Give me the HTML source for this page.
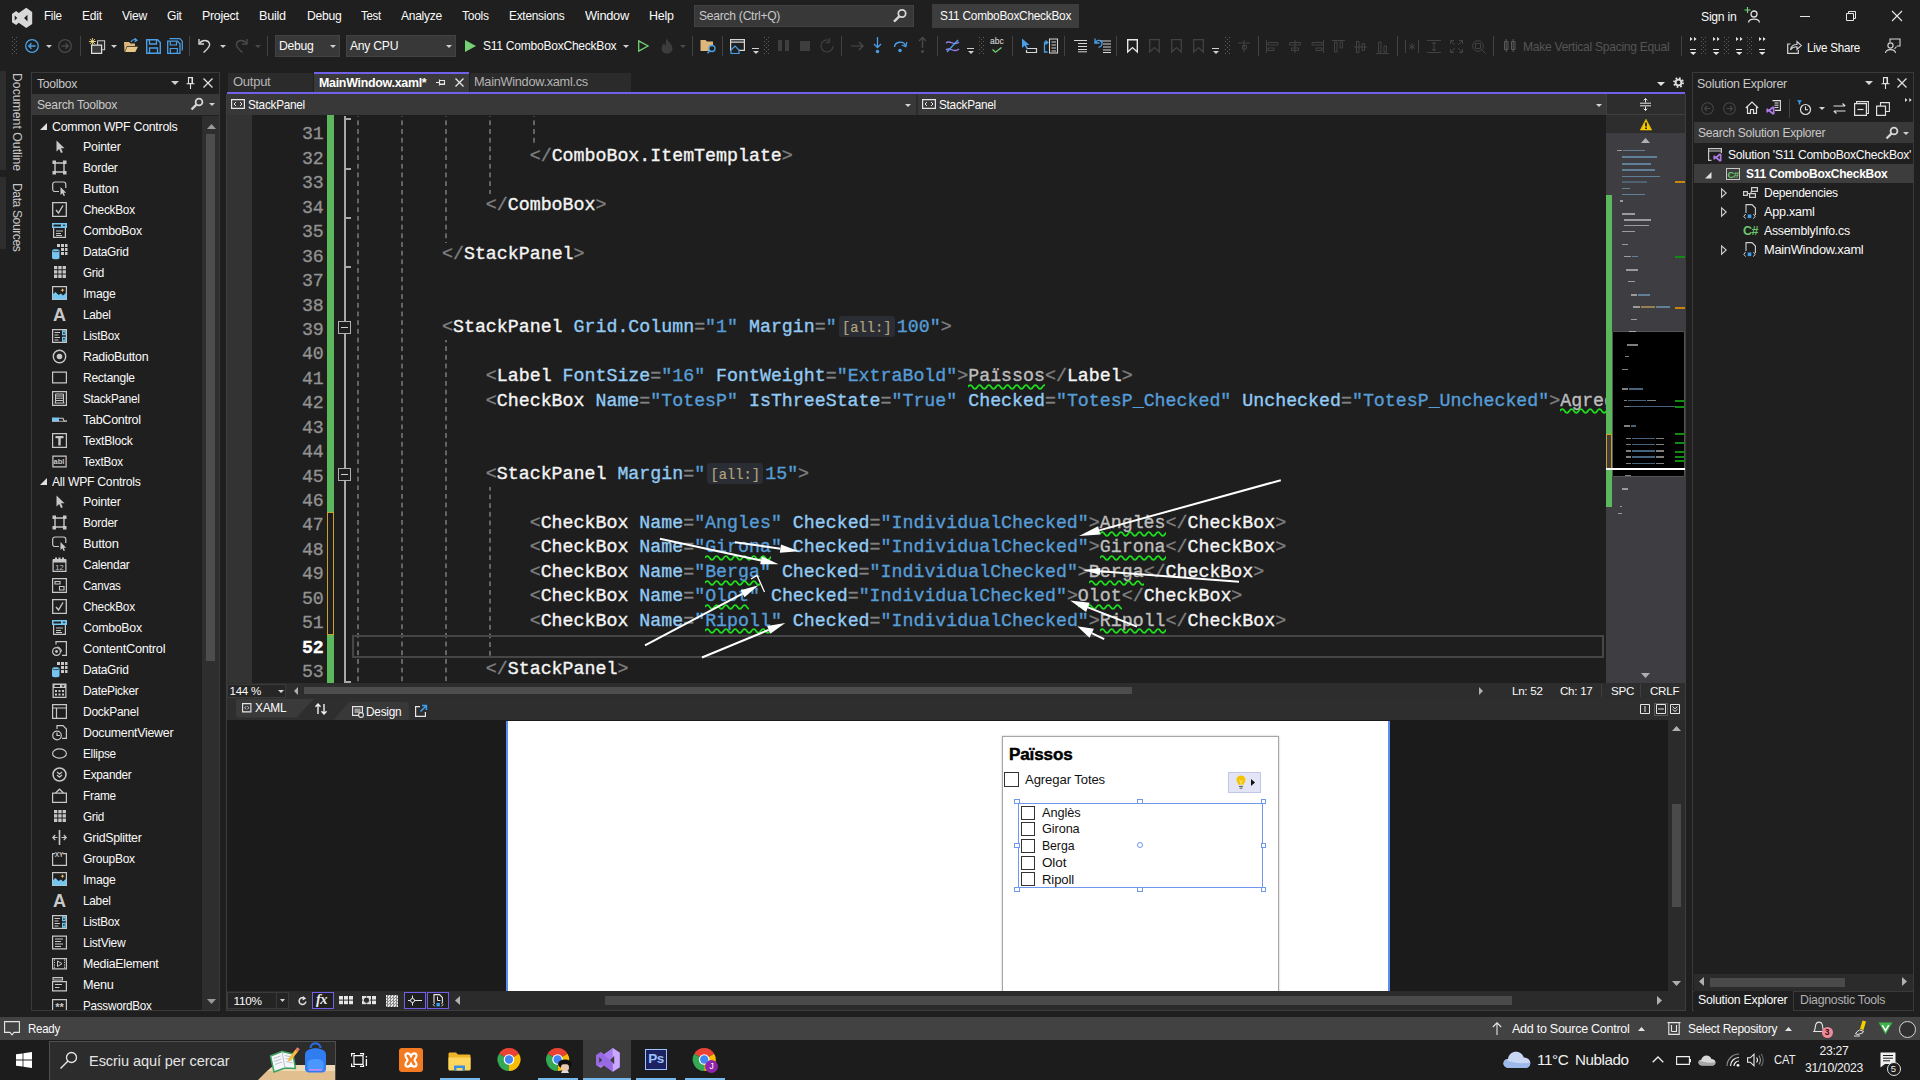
<!DOCTYPE html>
<html><head><meta charset="utf-8"><title>S11 ComboBoxCheckBox</title>
<style>
*{box-sizing:border-box;margin:0;padding:0}
html,body{width:1920px;height:1080px;overflow:hidden;background:#1f1f1f}
body{font-family:"Liberation Sans",sans-serif;font-size:12px;color:#f0f0f0}
#root{position:relative;width:1920px;height:1080px;overflow:hidden;background:#1f1f1f}
.a{position:absolute}
.t{position:absolute;white-space:nowrap;line-height:16px;height:16px;font-size:12.2px;letter-spacing:-0.27px;color:#fafafa}
.dim{color:#6a6a6a}
.g{color:#c8c8c8}
svg{position:absolute;overflow:visible}
.mono{font-family:"Liberation Mono",monospace}
.code{position:absolute;white-space:pre;font-family:"Liberation Mono",monospace;font-size:18.27px;line-height:24px;height:24px;color:#bdbdbd;-webkit-text-stroke:0.35px currentColor}
.ln{position:absolute;white-space:pre;font-family:"Liberation Mono",monospace;font-size:18.25px;line-height:24px;height:24px;color:#929292;-webkit-text-stroke:0.3px currentColor;width:60px;text-align:right;left:263.8px}
.k{color:#f4f4f4}.p{color:#808080}.at{color:#92caf4}.v{color:#569cd6}.q{color:#a8c8e8}
.sq{position:relative}
.hint{display:inline-block;font-size:13.75px;color:#b3a47c;background:#2b2d35;border-radius:3px;padding:0 3.3px 0 3.4px;height:20.8px;line-height:25.3px;vertical-align:-0.1px;margin:0 2px 0 1.9px;-webkit-text-stroke:0.2px currentColor}
.guide{position:absolute;width:2px;background-image:linear-gradient(#646464 0 4.4px,transparent 4.4px 8.7px);background-size:2px 8.7px;background-repeat:repeat-y}
</style></head><body><div id="root">
<svg style="left:0px;top:0px" width="40" height="32" viewBox="0 0 40 32"><path d="M12 13.9L16.1 11.1L18.75 13.1L26.25 7.8L32.2 11.9V24.1L26.25 28.1L18.75 22.8L16.1 24.9L12 22.2ZM14.7 15.6V20.6L17.2 18.1ZM27.5 14.7L24.06 18.1L27.5 21.6Z" fill="#d8d8d8" fill-rule="evenodd"/></svg>
<div class="t " style="left:44.25px;top:8px;font-size:12.2px;letter-spacing:-0.27px;transform:scaleX(0.9555);transform-origin:0 50%;">File</div>
<div class="t " style="left:82.25px;top:8px;font-size:12.2px;letter-spacing:-0.27px;transform:scaleX(0.9904);transform-origin:0 50%;">Edit</div>
<div class="t " style="left:122px;top:8px;font-size:12.2px;letter-spacing:-0.27px;transform:scaleX(0.9943);transform-origin:0 50%;">View</div>
<div class="t " style="left:167.25px;top:8px;font-size:12.2px;letter-spacing:-0.27px;transform:scaleX(0.9980);transform-origin:0 50%;">Git</div>
<div class="t " style="left:202.25px;top:8px;font-size:12.2px;letter-spacing:-0.27px;transform:scaleX(1.0186);transform-origin:0 50%;">Project</div>
<div class="t " style="left:259.25px;top:8px;font-size:12.2px;letter-spacing:-0.27px;transform:scaleX(1.0377);transform-origin:0 50%;">Build</div>
<div class="t " style="left:306.5px;top:8px;font-size:12.2px;letter-spacing:-0.27px;transform:scaleX(0.9972);transform-origin:0 50%;">Debug</div>
<div class="t " style="left:361px;top:8px;font-size:12.2px;letter-spacing:-0.27px;transform:scaleX(0.9392);transform-origin:0 50%;">Test</div>
<div class="t " style="left:401px;top:8px;font-size:12.2px;letter-spacing:-0.27px;transform:scaleX(0.9877);transform-origin:0 50%;">Analyze</div>
<div class="t " style="left:462.25px;top:8px;font-size:12.2px;letter-spacing:-0.27px;transform:scaleX(0.9860);transform-origin:0 50%;">Tools</div>
<div class="t " style="left:509.4px;top:8px;font-size:12.2px;letter-spacing:-0.27px;transform:scaleX(0.9759);transform-origin:0 50%;">Extensions</div>
<div class="t " style="left:585px;top:8px;font-size:12.2px;letter-spacing:-0.27px;transform:scaleX(1.0534);transform-origin:0 50%;">Window</div>
<div class="t " style="left:649.4px;top:8px;font-size:12.2px;letter-spacing:-0.27px;transform:scaleX(1.0246);transform-origin:0 50%;">Help</div>
<div class="a" style="left:694px;top:5px;width:220px;height:22px;background:#383838;border:1px solid #424242"></div>
<div class="t g" style="left:699.4px;top:8px;font-size:12.2px;letter-spacing:-0.27px;transform:scaleX(0.9938);transform-origin:0 50%;">Search (Ctrl+Q)</div>
<svg style="left:892px;top:8px" width="16" height="16" viewBox="0 0 16 16"><circle cx="10" cy="5.5" r="3.7" fill="none" stroke="#d6d6d6" stroke-width="1.8"/><path d="M7.3 8.3L2 13.6" stroke="#d6d6d6" stroke-width="2.4"/></svg>
<div class="a" style="left:932px;top:4px;width:147px;height:24px;background:#3d3d3d;"></div>
<div class="t " style="left:940px;top:8px;font-size:12.2px;letter-spacing:-0.27px;transform:scaleX(0.9741);transform-origin:0 50%;">S11 ComboBoxCheckBox</div>
<div class="t " style="left:1701px;top:9px;font-size:12.2px;letter-spacing:-0.27px;transform:scaleX(1.0025);transform-origin:0 50%;">Sign in</div>
<svg style="left:1746px;top:7px" width="16" height="18" viewBox="0 0 16 18"><circle cx="8" cy="7" r="3" fill="none" stroke="#e0e0e0" stroke-width="1.3"/><path d="M2.5 15.5C3 11 13 11 13.5 15.5" fill="none" stroke="#e0e0e0" stroke-width="1.3"/><path d="M1.5 0V6M-1.5 3H4.5" stroke="#74d174" stroke-width="1.2"/></svg>
<div class="a" style="left:1800px;top:16px;width:10px;height:1px;background:#e6e6e6;"></div>
<svg style="left:1846px;top:11px" width="10" height="10" viewBox="0 0 10 10"><path d="M0.5 2.5H7.5V9.5H0.5Z M2.5 2.5V0.5H9.5V7.5H7.5" fill="none" stroke="#e6e6e6" stroke-width="1"/></svg>
<svg style="left:1892px;top:11px" width="10" height="10" viewBox="0 0 10 10"><path d="M0 0L10 10M10 0L0 10" stroke="#e6e6e6" stroke-width="1.1"/></svg>
<div class="a" style="left:11px;top:35.6px;width:6px;height:18px;background-image:radial-gradient(circle at 1.5px 1.5px,#5e5e5e 0.5px,transparent 0.7px),radial-gradient(circle at 3.5px 3.5px,#5e5e5e 0.5px,transparent 0.7px);background-size:4px 4px"></div>
<svg style="left:23.6px;top:37.5px" width="16" height="16" viewBox="0 0 16 16"><circle cx="8" cy="8" r="6.3" fill="none" stroke="#4aa0e8" stroke-width="1.3"/><path d="M11.5 8H5M7.5 5.2L4.7 8L7.5 10.8" fill="none" stroke="#4aa0e8" stroke-width="1.3"/></svg>
<svg style="left:46.0px;top:44.5px" width="6" height="3" viewBox="0 0 6 3"><path d="M0 0H6L3.0 3Z" fill="#d0d0d0"/></svg>
<svg style="left:57.3px;top:37.5px" width="16" height="16" viewBox="0 0 16 16"><circle cx="8" cy="8" r="6.3" fill="none" stroke="#4a4a4a" stroke-width="1.3"/><path d="M4.5 8H11M8.5 5.2L11.3 8L8.5 10.8" fill="none" stroke="#4a4a4a" stroke-width="1.3"/></svg>
<div class="a" style="left:80px;top:36px;width:1px;height:20px;background:#424242;"></div>
<svg style="left:89px;top:38px" width="17" height="17" viewBox="0 0 17 17"><path d="M8.6 2.8H15.6V11.8H8.6Z" fill="#2a2a2a" stroke="#c8c8c8" stroke-width="1.1"/><path d="M2.6 7.2H12.6V15.4H2.6Z" fill="#3a3a3a" stroke="#e0e0e0" stroke-width="1.2"/><path d="M3.4 0V7M-0.1 3.5H6.9M0.9 1L5.9 6M5.9 1L0.9 6" stroke="#f5e08a" stroke-width="0.9"/></svg>
<svg style="left:111.0px;top:44.5px" width="6" height="3" viewBox="0 0 6 3"><path d="M0 0H6L3.0 3Z" fill="#d0d0d0"/></svg>
<svg style="left:123px;top:38px" width="16" height="16" viewBox="0 0 16 16"><path d="M1 4H6L7.5 5.5H12V8H4L1.5 14Z" fill="#dcb67a"/><path d="M4.3 8.7H15L12.3 14H2Z" fill="#e8c88a"/><path d="M8 4C9 1.5 11.5 1 13.5 2.2M11.8 0.2L14 2.3L11.6 3.8" fill="none" stroke="#4aa0e8" stroke-width="1.2"/></svg>
<svg style="left:146px;top:39px" width="15" height="15" viewBox="0 0 15 15"><path d="M0.7 0.7H11.5L14.3 3.5V14.3H0.7Z" fill="none" stroke="#4aa0e8" stroke-width="1.4"/><path d="M3.5 1V5H10.5V1M3.5 14V9H11.5V14" fill="none" stroke="#4aa0e8" stroke-width="1.3"/></svg>
<svg style="left:167px;top:38px" width="16" height="16" viewBox="0 0 16 16"><path d="M2.5 0.7H12.8L15.3 3.2V12.5" fill="none" stroke="#4aa0e8" stroke-width="1.2"/><path d="M0.7 3.2H10.5L13 5.7V15.3H0.7Z" fill="none" stroke="#4aa0e8" stroke-width="1.3"/><path d="M3.3 3.5V7H9.5V3.5M3.3 15V10.5H10.3V15" fill="none" stroke="#4aa0e8" stroke-width="1.2"/></svg>
<div class="a" style="left:189px;top:36px;width:1px;height:20px;background:#424242;"></div>
<svg style="left:198px;top:38px" width="14" height="16" viewBox="0 0 14 16"><path d="M1 1V6H6" fill="none" stroke="#d6d6d6" stroke-width="1.4"/><path d="M1.5 5.5C4 1.5 10 1.5 11.5 5.5C12.6 9 8 12 5.5 14.5" fill="none" stroke="#d6d6d6" stroke-width="1.4"/></svg>
<svg style="left:220.0px;top:44.5px" width="6" height="3" viewBox="0 0 6 3"><path d="M0 0H6L3.0 3Z" fill="#d0d0d0"/></svg>
<svg style="left:234px;top:38px" width="14" height="16" viewBox="0 0 14 16"><path d="M13 1V6H8" fill="none" stroke="#4a4a4a" stroke-width="1.4"/><path d="M12.5 5.5C10 1.5 4 1.5 2.5 5.5C1.4 9 6 12 8.5 14.5" fill="none" stroke="#4a4a4a" stroke-width="1.4"/></svg>
<svg style="left:255.0px;top:44.5px" width="6" height="3" viewBox="0 0 6 3"><path d="M0 0H6L3.0 3Z" fill="#4a4a4a"/></svg>
<div class="a" style="left:267px;top:36px;width:1px;height:20px;background:#424242;"></div>
<div class="a" style="left:275px;top:35px;width:65px;height:22px;background:#383838;border:1px solid #424242"></div>
<div class="t " style="left:279px;top:38px;">Debug</div>
<svg style="left:330.0px;top:45.0px" width="6" height="3" viewBox="0 0 6 3"><path d="M0 0H6L3.0 3Z" fill="#d0d0d0"/></svg>
<div class="a" style="left:346px;top:35px;width:110px;height:22px;background:#383838;border:1px solid #424242"></div>
<div class="t " style="left:350px;top:38px;">Any CPU</div>
<svg style="left:446.0px;top:44.5px" width="6" height="3" viewBox="0 0 6 3"><path d="M0 0H6L3.0 3Z" fill="#d0d0d0"/></svg>
<svg style="left:465px;top:40px" width="11" height="12" viewBox="0 0 11 12"><path d="M0 0L11 6L0 12Z" fill="#74d174"/></svg>
<div class="t " style="left:483px;top:38px;font-size:12.2px;letter-spacing:-0.27px;transform:scaleX(0.9908);transform-origin:0 50%;">S11 ComboBoxCheckBox</div>
<svg style="left:623.0px;top:44.5px" width="6" height="3" viewBox="0 0 6 3"><path d="M0 0H6L3.0 3Z" fill="#d0d0d0"/></svg>
<svg style="left:638px;top:40px" width="11" height="12" viewBox="0 0 11 12"><path d="M0.7 0.9L10 6L0.7 11.1Z" fill="none" stroke="#74d174" stroke-width="1.3"/></svg>
<svg style="left:660px;top:38px" width="14" height="16" viewBox="0 0 14 16"><path d="M7 0.5C8 4 12.5 6 12.5 10.5C12.5 13.5 10 15.5 7 15.5C4 15.5 1.5 13.5 1.5 10.5C1.5 8 3 7 4 5C4.5 7 5.5 7.5 6 7.5C5.5 5 5.5 2.5 7 0.5Z" fill="#3c3c3c"/></svg>
<svg style="left:680.0px;top:44.5px" width="6" height="3" viewBox="0 0 6 3"><path d="M0 0H6L3.0 3Z" fill="#4a4a4a"/></svg>
<div class="a" style="left:692px;top:36px;width:1px;height:20px;background:#424242;"></div>
<svg style="left:700px;top:39px" width="17" height="15" viewBox="0 0 17 15"><path d="M0.5 1H5.5L7 2.5H13V12H0.5Z" fill="#dcb67a"/><circle cx="12" cy="9.5" r="3" fill="#1f1f1f" stroke="#4aa0e8" stroke-width="1.3"/><path d="M9.8 11.8L7.5 14.3" stroke="#4aa0e8" stroke-width="1.5"/></svg>
<div class="a" style="left:722px;top:36px;width:1px;height:20px;background:#424242;"></div>
<svg style="left:730px;top:39px" width="16" height="15" viewBox="0 0 16 15"><path d="M0.6 0.6H14.4V11.4H0.6Z M0.6 3.2H14.4" fill="none" stroke="#d6d6d6" stroke-width="1.2"/><path d="M1 11L5 7L9 11V14.5H1Z" fill="#1f1f1f" stroke="#4aa0e8" stroke-width="1.2"/></svg>
<div class="a" style="left:752px;top:48px;width:7px;height:1px;background:#d0d0d0;"></div>
<svg style="left:752.5px;top:50.5px" width="6" height="3" viewBox="0 0 6 3"><path d="M0 0H6L3.0 3Z" fill="#d0d0d0"/></svg>
<div class="a" style="left:763px;top:35.6px;width:6px;height:18px;background-image:radial-gradient(circle at 1.5px 1.5px,#5e5e5e 0.5px,transparent 0.7px),radial-gradient(circle at 3.5px 3.5px,#5e5e5e 0.5px,transparent 0.7px);background-size:4px 4px"></div>
<div class="a" style="left:778px;top:40px;width:4px;height:11px;background:#3e3e3e;"></div>
<div class="a" style="left:785px;top:40px;width:4px;height:11px;background:#3e3e3e;"></div>
<div class="a" style="left:800px;top:41px;width:10px;height:10px;background:#3e3e3e;"></div>
<svg style="left:820px;top:38px" width="15" height="16" viewBox="0 0 15 16"><path d="M9 2.3A6 6 0 1 0 13 8" fill="none" stroke="#3e3e3e" stroke-width="1.3"/><path d="M9.5 0V4.5H5.5" fill="none" stroke="#3e3e3e" stroke-width="1.3"/></svg>
<div class="a" style="left:841px;top:36px;width:1px;height:20px;background:#424242;"></div>
<svg style="left:851px;top:40px" width="13" height="12" viewBox="0 0 13 12"><path d="M0 6H12M8 2L12 6L8 10" fill="none" stroke="#4a4a4a" stroke-width="1.2"/></svg>
<svg style="left:873px;top:37px" width="9" height="18" viewBox="0 0 9 18"><path d="M4.5 0V10M1 7L4.5 10.5L8 7" fill="none" stroke="#4aa0e8" stroke-width="1.3"/><circle cx="4.5" cy="14.5" r="1.7" fill="#4aa0e8"/></svg>
<svg style="left:893px;top:39px" width="15" height="14" viewBox="0 0 15 14"><path d="M1.5 8C2 2 11 1.5 12.5 7" fill="none" stroke="#4aa0e8" stroke-width="1.4"/><path d="M13.8 3.2L12.8 7.6L8.8 6" fill="none" stroke="#4aa0e8" stroke-width="1.3"/><circle cx="7" cy="11.5" r="1.8" fill="#4aa0e8"/></svg>
<svg style="left:918px;top:37px" width="9" height="18" viewBox="0 0 9 18"><path d="M4.5 11V1M1 4L4.5 0.5L8 4" fill="none" stroke="#4a4a4a" stroke-width="1.3"/><circle cx="4.5" cy="14.5" r="1.5" fill="#4a4a4a"/></svg>
<div class="a" style="left:937px;top:36px;width:1px;height:20px;background:#424242;"></div>
<svg style="left:945px;top:39px" width="16" height="15" viewBox="0 0 16 15"><path d="M1 4C5 0 9 8 14 3M1 11C5 7 9 15 14 10" fill="none" stroke="#9a7de8" stroke-width="1.3"/><path d="M2 13L13 1" stroke="#4aa0e8" stroke-width="1.3"/></svg>
<div class="a" style="left:967px;top:48px;width:7px;height:1px;background:#d0d0d0;"></div>
<svg style="left:967.5px;top:50.5px" width="6" height="3" viewBox="0 0 6 3"><path d="M0 0H6L3.0 3Z" fill="#d0d0d0"/></svg>
<div class="a" style="left:978px;top:35.6px;width:6px;height:18px;background-image:radial-gradient(circle at 1.5px 1.5px,#5e5e5e 0.5px,transparent 0.7px),radial-gradient(circle at 3.5px 3.5px,#5e5e5e 0.5px,transparent 0.7px);background-size:4px 4px"></div>
<div class="a" style="left:990px;top:37px;font-size:8.5px;line-height:9px;color:#e0e0e0;letter-spacing:0">abc</div>
<svg style="left:992px;top:47px" width="10" height="6" viewBox="0 0 10 6"><path d="M0.5 2.5L3.5 5.2L9.5 0.5" fill="none" stroke="#74d174" stroke-width="1.3"/></svg>
<div class="a" style="left:1012px;top:36px;width:1px;height:20px;background:#424242;"></div>
<svg style="left:1021px;top:38px" width="17" height="16" viewBox="0 0 17 16"><path d="M1 0.5V10L3.7 7.6L5.8 11.5L7.3 10.7L5.2 7H8.5Z" fill="#4aa0e8"/><path d="M6.5 10.5H15.5V14.5H5.5V12" fill="none" stroke="#d6d6d6" stroke-width="1.2"/></svg>
<svg style="left:1043px;top:38px" width="16" height="16" viewBox="0 0 16 16"><path d="M6.5 1H14.5V15H6.5Z M8.5 4H13M8.5 7H13M8.5 10H13M8.5 13H13" fill="none" stroke="#d6d6d6" stroke-width="1.1"/><path d="M4.5 14H1.5V4.5H4M2.5 2.5L4.8 4.6L2.5 6.6" fill="none" stroke="#4aa0e8" stroke-width="1.3"/></svg>
<div class="a" style="left:1064px;top:36px;width:1px;height:20px;background:#424242;"></div>
<svg style="left:1074px;top:40px" width="13" height="12" viewBox="0 0 13 12"><path d="M0 0.5H13M4 3.5H13M4 6.5H13M4 9.5H13M4 11.8H13" stroke="#d6d6d6" stroke-width="1"/></svg>
<svg style="left:1094px;top:38px" width="18" height="15" viewBox="0 0 18 15"><path d="M6 3H17M9 6H17M9 9H17M9 12H17M9 14.5H17" stroke="#d6d6d6" stroke-width="1"/><path d="M1 0.5V5H5.5M1.5 4.5C3 1 8.5 2 8 6C7.7 8 6 9 4.5 9.5" fill="none" stroke="#4aa0e8" stroke-width="1.3"/></svg>
<div class="a" style="left:1116px;top:36px;width:1px;height:20px;background:#424242;"></div>
<svg style="left:1127px;top:39px" width="11" height="14" viewBox="0 0 11 14"><path d="M0.7 0.7H10.3V13L5.5 8.6L0.7 13Z" fill="none" stroke="#e8e8e8" stroke-width="1.4"/></svg>
<svg style="left:1149px;top:39px" width="11" height="14" viewBox="0 0 11 14"><path d="M0.7 0.7H10.3V13L5.5 8.6L0.7 13Z" fill="none" stroke="#424242" stroke-width="1.3"/></svg>
<svg style="left:1171px;top:39px" width="11" height="14" viewBox="0 0 11 14"><path d="M0.7 0.7H10.3V13L5.5 8.6L0.7 13Z" fill="none" stroke="#424242" stroke-width="1.3"/></svg>
<svg style="left:1193px;top:39px" width="11" height="14" viewBox="0 0 11 14"><path d="M0.7 0.7H10.3V13L5.5 8.6L0.7 13Z" fill="none" stroke="#424242" stroke-width="1.3"/></svg>
<div class="a" style="left:1212px;top:48px;width:7px;height:1px;background:#d0d0d0;"></div>
<svg style="left:1212.5px;top:50.5px" width="6" height="3" viewBox="0 0 6 3"><path d="M0 0H6L3.0 3Z" fill="#d0d0d0"/></svg>
<div class="a" style="left:1224px;top:35.6px;width:6px;height:18px;background-image:radial-gradient(circle at 1.5px 1.5px,#5e5e5e 0.5px,transparent 0.7px),radial-gradient(circle at 3.5px 3.5px,#5e5e5e 0.5px,transparent 0.7px);background-size:4px 4px"></div>
<svg style="left:1238px;top:40px" width="12" height="12" viewBox="0 0 12 12"><path d="M0 3H12M6 0V12M4.5 5.5H8.5V9H4.5Z" fill="none" stroke="#424242" stroke-width="1"/></svg>
<div class="a" style="left:1258px;top:36px;width:1px;height:20px;background:#424242;"></div>
<svg style="left:1266px;top:40px" width="14" height="13" viewBox="0 0 14 13"><path d="M0.5 0V13M2 2.5H12V5H2ZM2 8H8V10.5H2Z" fill="none" stroke="#424242" stroke-width="1"/></svg>
<svg style="left:1288px;top:40px" width="14" height="13" viewBox="0 0 14 13"><path d="M7 0V13M1.5 2.5H12.5V5H1.5ZM3.5 8H10.5V10.5H3.5Z" fill="none" stroke="#424242" stroke-width="1"/></svg>
<svg style="left:1310px;top:40px" width="14" height="13" viewBox="0 0 14 13"><path d="M13.5 0V13M2 2.5H12V5H2ZM6 8H12V10.5H6Z" fill="none" stroke="#424242" stroke-width="1"/></svg>
<svg style="left:1332px;top:40px" width="13" height="14" viewBox="0 0 13 14"><path d="M0 0.5H13M2.5 2H5V12H2.5ZM8 2H10.5V8H8Z" fill="none" stroke="#424242" stroke-width="1"/></svg>
<svg style="left:1354px;top:40px" width="13" height="14" viewBox="0 0 13 14"><path d="M0 7H13M2.5 1.5H5V12.5H2.5ZM8 3.5H10.5V10.5H8Z" fill="none" stroke="#424242" stroke-width="1"/></svg>
<svg style="left:1376px;top:40px" width="13" height="14" viewBox="0 0 13 14"><path d="M0 13.5H13M2.5 2H5V12H2.5ZM8 6H10.5V12H8Z" fill="none" stroke="#424242" stroke-width="1"/></svg>
<div class="a" style="left:1397px;top:36px;width:1px;height:20px;background:#424242;"></div>
<svg style="left:1405px;top:40px" width="14" height="13" viewBox="0 0 14 13"><path d="M0.5 0V13M13.5 0V13M7 3V10M4 5L10 8.5M10 5L4 8.5" fill="none" stroke="#424242" stroke-width="1"/></svg>
<svg style="left:1427px;top:40px" width="14" height="13" viewBox="0 0 14 13"><path d="M0 0.5H14M0 12.5H14M7 2V11M5 4L7 2L9 4M5 9L7 11L9 9" fill="none" stroke="#424242" stroke-width="1"/></svg>
<svg style="left:1450px;top:40px" width="13" height="13" viewBox="0 0 13 13"><path d="M0.5 4V0.5H4M9 0.5H12.5V4M12.5 9V12.5H9M4 12.5H0.5V9M1 1L5 5M12 1L8 5M12 12L8 8M1 12L5 8" fill="none" stroke="#424242" stroke-width="1"/></svg>
<svg style="left:1472px;top:40px" width="14" height="14" viewBox="0 0 14 14"><circle cx="6" cy="6" r="5.3" fill="none" stroke="#424242" stroke-width="1"/><path d="M10 10L13.5 13.5M3.5 3.5H8.5V8.5H3.5Z" fill="none" stroke="#424242" stroke-width="1"/></svg>
<div class="a" style="left:1493px;top:36px;width:1px;height:20px;background:#424242;"></div>
<svg style="left:1504px;top:39px" width="12" height="14" viewBox="0 0 12 14"><path d="M0.5 2.5H4V10.5H0.5ZM7.5 2.5H11V10.5H7.5ZM2.2 0V13M9.2 0V13" fill="none" stroke="#5a5a5a" stroke-width="1"/></svg>
<div class="t " style="left:1523px;top:39px;font-size:12.2px;letter-spacing:-0.27px;transform:scaleX(0.9898);transform-origin:0 50%;color:#555555">Make Vertical Spacing Equal</div>
<div class="a" style="left:1681px;top:36px;width:1px;height:20px;background:#424242;"></div>
<svg style="left:1689.9px;top:37.3px" width="7" height="4" viewBox="0 0 7 4"><path d="M0 0L2.6 2L0 4ZM4 0L6.6 2L4 4Z" fill="#e6e6e6"/></svg>
<div class="a" style="left:1689.9px;top:49px;width:6.4px;height:1.1px;background:#e6e6e6;"></div>
<svg style="left:1689.9px;top:51.9px" width="6.4" height="3.0" viewBox="0 0 6.4 3.0"><path d="M0 0H6.4L3.2 3.0Z" fill="#e6e6e6"/></svg>
<svg style="left:1712.8px;top:37.3px" width="7" height="4" viewBox="0 0 7 4"><path d="M0 0L2.6 2L0 4ZM4 0L6.6 2L4 4Z" fill="#e6e6e6"/></svg>
<div class="a" style="left:1712.8px;top:49px;width:6.4px;height:1.1px;background:#e6e6e6;"></div>
<svg style="left:1712.8px;top:51.9px" width="6.4" height="3.0" viewBox="0 0 6.4 3.0"><path d="M0 0H6.4L3.2 3.0Z" fill="#e6e6e6"/></svg>
<svg style="left:1735.7px;top:37.3px" width="7" height="4" viewBox="0 0 7 4"><path d="M0 0L2.6 2L0 4ZM4 0L6.6 2L4 4Z" fill="#e6e6e6"/></svg>
<div class="a" style="left:1735.7px;top:49px;width:6.4px;height:1.1px;background:#e6e6e6;"></div>
<svg style="left:1735.7px;top:51.9px" width="6.4" height="3.0" viewBox="0 0 6.4 3.0"><path d="M0 0H6.4L3.2 3.0Z" fill="#e6e6e6"/></svg>
<svg style="left:1758.6px;top:37.3px" width="7" height="4" viewBox="0 0 7 4"><path d="M0 0L2.6 2L0 4ZM4 0L6.6 2L4 4Z" fill="#e6e6e6"/></svg>
<div class="a" style="left:1758.6px;top:49px;width:6.4px;height:1.1px;background:#e6e6e6;"></div>
<svg style="left:1758.6px;top:51.9px" width="6.4" height="3.0" viewBox="0 0 6.4 3.0"><path d="M0 0H6.4L3.2 3.0Z" fill="#e6e6e6"/></svg>
<div class="a" style="left:1699.6px;top:35.6px;width:6px;height:18px;background-image:radial-gradient(circle at 1.5px 1.5px,#5e5e5e 0.5px,transparent 0.7px),radial-gradient(circle at 3.5px 3.5px,#5e5e5e 0.5px,transparent 0.7px);background-size:4px 4px"></div>
<div class="a" style="left:1722.8px;top:35.6px;width:6px;height:18px;background-image:radial-gradient(circle at 1.5px 1.5px,#5e5e5e 0.5px,transparent 0.7px),radial-gradient(circle at 3.5px 3.5px,#5e5e5e 0.5px,transparent 0.7px);background-size:4px 4px"></div>
<div class="a" style="left:1746px;top:35.6px;width:6px;height:18px;background-image:radial-gradient(circle at 1.5px 1.5px,#5e5e5e 0.5px,transparent 0.7px),radial-gradient(circle at 3.5px 3.5px,#5e5e5e 0.5px,transparent 0.7px);background-size:4px 4px"></div>
<svg style="left:1787px;top:40px" width="15" height="14" viewBox="0 0 15 14"><path d="M3.5 4H0.7V13.3H11.3V10" fill="none" stroke="#d6d6d6" stroke-width="1.2"/><path d="M3.5 10C4 6 7 4.5 10 4.5V1.5L14.3 5.5L10 9.5V6.8C7.5 6.8 5 7.5 3.5 10Z" fill="none" stroke="#d6d6d6" stroke-width="1.1"/></svg>
<div class="t " style="left:1807px;top:40px;font-size:12.2px;letter-spacing:-0.27px;transform:scaleX(0.9529);transform-origin:0 50%;">Live Share</div>
<svg style="left:1884px;top:38px" width="17" height="16" viewBox="0 0 17 16"><path d="M6 4V1H16V8H13" fill="none" stroke="#d6d6d6" stroke-width="1.1"/><circle cx="6.5" cy="7.5" r="2.6" fill="none" stroke="#d6d6d6" stroke-width="1.1"/><path d="M1.5 15C2 10.5 11 10.5 11.5 15" fill="none" stroke="#d6d6d6" stroke-width="1.1"/><path d="M12.5 8.5L10.5 11" stroke="#d6d6d6" stroke-width="1.1"/></svg>
<div class="a" style="left:0px;top:71.4px;width:6px;height:98.6px;background:#2e2e2e;"></div>
<div class="a" style="left:0px;top:177.3px;width:6px;height:72px;background:#2e2e2e;"></div>
<div class="t g" style="left:10px;top:72.5px;writing-mode:vertical-rl;height:auto;line-height:14px;width:14px;letter-spacing:0.04px">Document Outline</div>
<div class="t g" style="left:10px;top:182.5px;writing-mode:vertical-rl;height:auto;line-height:14px;width:14px;letter-spacing:-0.45px">Data Sources</div>
<div class="a" style="left:31px;top:72px;width:188.6px;height:939px;background:#1f1f1f;border:1px solid #3a3a3a"></div>
<div class="t g" style="left:37px;top:75.8px;">Toolbox</div>
<svg style="left:171.0px;top:81.0px" width="8" height="4" viewBox="0 0 8 4"><path d="M0 0H8L4.0 4Z" fill="#d0d0d0"/></svg>
<svg style="left:186px;top:77px" width="9" height="12" viewBox="0 0 9 12"><path d="M2.5 0.6H6.5V6.5H2.5ZM0.5 6.8H8.5M4.5 7V12" fill="none" stroke="#e0e0e0" stroke-width="1.1"/><path d="M5.5 0.6H6.5V6.5H5.5Z" fill="#e0e0e0"/></svg>
<svg style="left:203px;top:78px" width="10" height="10" viewBox="0 0 10 10"><path d="M0.5 0.5L9.5 9.5M9.5 0.5L0.5 9.5" stroke="#e0e0e0" stroke-width="1.3"/></svg>
<div class="a" style="left:32px;top:94px;width:186.6px;height:21px;background:#383838;"></div>
<div class="t g" style="left:37px;top:96.5px;">Search Toolbox</div>
<svg style="left:190px;top:97px" width="14" height="14" viewBox="0 0 14 14"><circle cx="9" cy="5" r="3.4" fill="none" stroke="#d6d6d6" stroke-width="1.8"/><path d="M6.4 7.6L1.5 12.5" stroke="#d6d6d6" stroke-width="2.3"/></svg>
<svg style="left:209.0px;top:103.0px" width="6" height="3" viewBox="0 0 6 3"><path d="M0 0H6L3.0 3Z" fill="#d0d0d0"/></svg>
<div class="a" style="left:32px;top:116px;width:188px;height:894px;overflow:hidden">
<svg style="left:8px;top:7px" width="7" height="7" viewBox="0 0 7 7"><path d="M7 0V7H0Z" fill="#e0e0e0"/></svg><div class="t " style="left:19.5px;top:2.5px;font-size:12.2px;letter-spacing:-0.27px;transform:scaleX(1.0148);transform-origin:0 50%;">Common WPF Controls</div>
<svg style="left:20px;top:23.0px" width="15" height="15" viewBox="0 0 15 15"><path d="M4.5 1.5V12.5L7.2 10L9 14L10.8 13.2L9 9.3H12.5Z" fill="#c8c8c8"/></svg><div class="t " style="left:51.4px;top:22.5px;font-size:12.2px;letter-spacing:-0.27px;transform:scaleX(1.0228);transform-origin:0 50%;">Pointer</div>
<svg style="left:20px;top:44.0px" width="15" height="15" viewBox="0 0 15 15"><path d="M3 3H12V12H3Z" fill="none" stroke="#c8c8c8" stroke-width="1.4"/><path d="M0.5 0.5H4V4H0.5ZM11 0.5H14.5V4H11ZM0.5 11H4V14.5H0.5ZM11 11H14.5V14.5H11Z" fill="#c8c8c8"/></svg><div class="t " style="left:51.4px;top:43.5px;font-size:12.2px;letter-spacing:-0.27px;transform:scaleX(0.9887);transform-origin:0 50%;">Border</div>
<svg style="left:20px;top:65.0px" width="15" height="15" viewBox="0 0 15 15"><path d="M7 10.5H3A2.3 2.3 0 0 1 0.7 8.2V3.3A2.3 2.3 0 0 1 3 1H11.5A2.3 2.3 0 0 1 13.8 3.3V7" fill="none" stroke="#c8c8c8" stroke-width="1.2"/><path d="M8.5 6V14L10.4 12.2L11.6 15L13 14.4L11.8 11.7H14.2Z" fill="#c8c8c8"/></svg><div class="t " style="left:51.4px;top:64.5px;font-size:12.2px;letter-spacing:-0.27px;transform:scaleX(1.0580);transform-origin:0 50%;">Button</div>
<svg style="left:20px;top:86.0px" width="15" height="15" viewBox="0 0 15 15"><path d="M0.7 0.7H14.3V14.3H0.7Z" fill="none" stroke="#c8c8c8" stroke-width="1.3"/><path d="M4 8L6.5 11L11 3.5" fill="none" stroke="#c8c8c8" stroke-width="1.4"/></svg><div class="t " style="left:51.4px;top:85.5px;font-size:12.2px;letter-spacing:-0.27px;transform:scaleX(0.9702);transform-origin:0 50%;">CheckBox</div>
<svg style="left:20px;top:107.0px" width="15" height="15" viewBox="0 0 15 15"><path d="M0 0H15V5H0Z" fill="#75c5f0"/><path d="M1.5 1.5H9V3.5H1.5Z" fill="#1f1f1f"/><path d="M10.5 1.8H13.5L12 3.6Z" fill="#1f1f1f"/><path d="M1.6 5V14.4H13.4V5" fill="none" stroke="#c8c8c8" stroke-width="1.2"/><path d="M4 8H11M4 10.5H9M4 12.5H10" fill="none" stroke="#c8c8c8" stroke-width="1"/></svg><div class="t " style="left:51.4px;top:106.5px;font-size:12.2px;letter-spacing:-0.27px;transform:scaleX(1.0114);transform-origin:0 50%;">ComboBox</div>
<svg style="left:20px;top:128.0px" width="15" height="15" viewBox="0 0 15 15"><path d="M5 0H8V3H5ZM9 0H12V3H9ZM13 0H15.5V3H13ZM9 4H12V7H9ZM13 4H15.5V7H13ZM9 8H12V11H9ZM13 8H15.5V11H13Z" fill="#c8c8c8"/><path d="M0 6.5C0 4.8 7.5 4.8 7.5 6.5V14C7.5 15.7 0 15.7 0 14Z" fill="#75c5f0"/><path d="M0.3 6.7C0.5 8 7 8 7.2 6.7" fill="none" stroke="#1f1f1f" stroke-width="0.8"/></svg><div class="t " style="left:51.4px;top:127.5px;font-size:12.2px;letter-spacing:-0.27px;transform:scaleX(0.9774);transform-origin:0 50%;">DataGrid</div>
<svg style="left:20px;top:149.0px" width="15" height="15" viewBox="0 0 15 15"><path d="M2 1H5.3V4.3H2ZM6.3 1H9.6V4.3H6.3ZM10.6 1H13.9V4.3H10.6ZM2 5.3H5.3V8.6H2ZM6.3 5.3H9.6V8.6H6.3ZM10.6 5.3H13.9V8.6H10.6ZM2 9.6H5.3V12.9H2ZM6.3 9.6H9.6V12.9H6.3ZM10.6 9.6H13.9V12.9H10.6Z" fill="#c8c8c8"/></svg><div class="t " style="left:51.4px;top:148.5px;font-size:12.2px;letter-spacing:-0.27px;transform:scaleX(0.9606);transform-origin:0 50%;">Grid</div>
<svg style="left:20px;top:170.0px" width="15" height="15" viewBox="0 0 15 15"><path d="M0.6 0.6H14.4V13.4H0.6Z" fill="none" stroke="#c8c8c8" stroke-width="1.2"/><path d="M0.6 13.4V8.5L3.5 6L6.5 9L9 7.5L11 9.5L14.4 6.5V13.4Z" fill="#75c5f0"/><path d="M10.5 2.2L11.2 3.6L12.6 4.2L11.2 4.8L10.5 6.2L9.8 4.8L8.4 4.2L9.8 3.6Z" fill="#e8b46a"/></svg><div class="t " style="left:51.4px;top:169.5px;font-size:12.2px;letter-spacing:-0.27px;transform:scaleX(1.0014);transform-origin:0 50%;">Image</div>
<svg style="left:20px;top:191.0px" width="15" height="15" viewBox="0 0 15 15"><text x="7.5" y="14" font-family="Liberation Sans" font-weight="bold" font-size="18" text-anchor="middle" fill="#c8c8c8">A</text></svg><div class="t " style="left:51.4px;top:190.5px;font-size:12.2px;letter-spacing:-0.27px;transform:scaleX(0.9685);transform-origin:0 50%;">Label</div>
<svg style="left:20px;top:212.0px" width="15" height="15" viewBox="0 0 15 15"><path d="M0.6 1.6H14.4V14.4H0.6Z" fill="none" stroke="#c8c8c8" stroke-width="1.2"/><path d="M2.5 4.5H8M2.5 7H6.5M2.5 9.5H8M2.5 12H6.5" fill="none" stroke="#c8c8c8" stroke-width="1"/><path d="M10 2.2H13.8V7.2H10ZM10 8.8H13.8V13.8H10Z" fill="#75c5f0"/><path d="M10.8 5.8H13L11.9 3.6ZM10.8 10.2H13L11.9 12.4Z" fill="#1f1f1f"/></svg><div class="t " style="left:51.4px;top:211.5px;font-size:12.2px;letter-spacing:-0.27px;transform:scaleX(0.9602);transform-origin:0 50%;">ListBox</div>
<svg style="left:20px;top:233.0px" width="15" height="15" viewBox="0 0 15 15"><circle cx="7.5" cy="7.5" r="6.2" fill="none" stroke="#c8c8c8" stroke-width="1.4"/><circle cx="7.5" cy="7.5" r="2.8" fill="#c8c8c8"/></svg><div class="t " style="left:51.4px;top:232.5px;font-size:12.2px;letter-spacing:-0.27px;transform:scaleX(1.0183);transform-origin:0 50%;">RadioButton</div>
<svg style="left:20px;top:254.0px" width="15" height="15" viewBox="0 0 15 15"><path d="M0.6 2.1H14.4V12.9H0.6Z" fill="none" stroke="#c8c8c8" stroke-width="1.2"/></svg><div class="t " style="left:51.4px;top:253.5px;font-size:12.2px;letter-spacing:-0.27px;transform:scaleX(0.9876);transform-origin:0 50%;">Rectangle</div>
<svg style="left:20px;top:275.0px" width="15" height="15" viewBox="0 0 15 15"><path d="M0.6 0.6H14.4V14.4H0.6Z" fill="none" stroke="#c8c8c8" stroke-width="1.2"/><path d="M3.5 3H11.5V9.5H3.5ZM3.5 5H11.5M3.5 7.2H11.5M2.5 12H12.5M3.5 9.5V12M11.5 9.5V12" fill="none" stroke="#c8c8c8" stroke-width="1"/></svg><div class="t " style="left:51.4px;top:274.5px;font-size:12.2px;letter-spacing:-0.27px;transform:scaleX(0.9591);transform-origin:0 50%;">StackPanel</div>
<svg style="left:20px;top:296.0px" width="15" height="15" viewBox="0 0 15 15"><path d="M0 5.5H7V9.5H0Z" fill="#75c5f0"/><path d="M7 6.3H11L12 9H15" fill="none" stroke="#c8c8c8" stroke-width="1.1"/><path d="M0 9.3H15" fill="none" stroke="#c8c8c8" stroke-width="0.8"/></svg><div class="t " style="left:51.4px;top:295.5px;font-size:12.2px;letter-spacing:-0.27px;transform:scaleX(1.0276);transform-origin:0 50%;">TabControl</div>
<svg style="left:20px;top:317.0px" width="15" height="15" viewBox="0 0 15 15"><path d="M0.6 0.6H14.4V14.4H0.6Z" fill="none" stroke="#c8c8c8" stroke-width="1.2"/><path d="M3.5 3H11.5V5.2H8.7V12.5H6.3V5.2H3.5Z" fill="#c8c8c8"/></svg><div class="t " style="left:51.4px;top:316.5px;font-size:12.2px;letter-spacing:-0.27px;transform:scaleX(0.9965);transform-origin:0 50%;">TextBlock</div>
<svg style="left:20px;top:338.0px" width="15" height="15" viewBox="0 0 15 15"><path d="M0.9 2.1H14.1V12.9H0.9Z" fill="none" stroke="#c8c8c8" stroke-width="1.2"/><text x="7" y="10.3" font-family="Liberation Sans" font-weight="bold" font-size="7.5" text-anchor="middle" fill="#c8c8c8">abl</text></svg><div class="t " style="left:51.4px;top:337.5px;font-size:12.2px;letter-spacing:-0.27px;transform:scaleX(0.9601);transform-origin:0 50%;">TextBox</div>
<svg style="left:8px;top:362px" width="7" height="7" viewBox="0 0 7 7"><path d="M7 0V7H0Z" fill="#e0e0e0"/></svg><div class="t " style="left:19.5px;top:357.5px;font-size:12.2px;letter-spacing:-0.27px;transform:scaleX(1.0017);transform-origin:0 50%;">All WPF Controls</div>
<svg style="left:20px;top:378.0px" width="15" height="15" viewBox="0 0 15 15"><path d="M4.5 1.5V12.5L7.2 10L9 14L10.8 13.2L9 9.3H12.5Z" fill="#c8c8c8"/></svg><div class="t " style="left:51.4px;top:377.5px;font-size:12.2px;letter-spacing:-0.27px;transform:scaleX(1.0228);transform-origin:0 50%;">Pointer</div>
<svg style="left:20px;top:399.0px" width="15" height="15" viewBox="0 0 15 15"><path d="M3 3H12V12H3Z" fill="none" stroke="#c8c8c8" stroke-width="1.4"/><path d="M0.5 0.5H4V4H0.5ZM11 0.5H14.5V4H11ZM0.5 11H4V14.5H0.5ZM11 11H14.5V14.5H11Z" fill="#c8c8c8"/></svg><div class="t " style="left:51.4px;top:398.5px;font-size:12.2px;letter-spacing:-0.27px;transform:scaleX(0.9887);transform-origin:0 50%;">Border</div>
<svg style="left:20px;top:420.0px" width="15" height="15" viewBox="0 0 15 15"><path d="M7 10.5H3A2.3 2.3 0 0 1 0.7 8.2V3.3A2.3 2.3 0 0 1 3 1H11.5A2.3 2.3 0 0 1 13.8 3.3V7" fill="none" stroke="#c8c8c8" stroke-width="1.2"/><path d="M8.5 6V14L10.4 12.2L11.6 15L13 14.4L11.8 11.7H14.2Z" fill="#c8c8c8"/></svg><div class="t " style="left:51.4px;top:419.5px;font-size:12.2px;letter-spacing:-0.27px;transform:scaleX(1.0580);transform-origin:0 50%;">Button</div>
<svg style="left:20px;top:441.0px" width="15" height="15" viewBox="0 0 15 15"><path d="M1.1 3.1H13.9V14.4H1.1Z" fill="none" stroke="#c8c8c8" stroke-width="1.2"/><path d="M1 2H14V5.5H1ZM3 0.5H5V3H3ZM6.5 0.5H8.5V3H6.5ZM10 0.5H12V3H10Z" fill="#c8c8c8"/><text x="7.5" y="12.8" font-family="Liberation Sans" font-size="7.5" text-anchor="middle" fill="#c8c8c8">12</text></svg><div class="t " style="left:51.4px;top:440.5px;font-size:12.2px;letter-spacing:-0.27px;transform:scaleX(0.9843);transform-origin:0 50%;">Calendar</div>
<svg style="left:20px;top:462.0px" width="15" height="15" viewBox="0 0 15 15"><path d="M0.6 0.6H14.4V14.4H0.6Z" fill="none" stroke="#c8c8c8" stroke-width="1.2"/><path d="M3 3.5H8V6H3ZM7.5 8.5H12V12H7.5Z" fill="none" stroke="#c8c8c8" stroke-width="1.1"/></svg><div class="t " style="left:51.4px;top:461.5px;font-size:12.2px;letter-spacing:-0.27px;transform:scaleX(0.9461);transform-origin:0 50%;">Canvas</div>
<svg style="left:20px;top:483.0px" width="15" height="15" viewBox="0 0 15 15"><path d="M0.7 0.7H14.3V14.3H0.7Z" fill="none" stroke="#c8c8c8" stroke-width="1.3"/><path d="M4 8L6.5 11L11 3.5" fill="none" stroke="#c8c8c8" stroke-width="1.4"/></svg><div class="t " style="left:51.4px;top:482.5px;font-size:12.2px;letter-spacing:-0.27px;transform:scaleX(0.9702);transform-origin:0 50%;">CheckBox</div>
<svg style="left:20px;top:504.0px" width="15" height="15" viewBox="0 0 15 15"><path d="M0 0H15V5H0Z" fill="#75c5f0"/><path d="M1.5 1.5H9V3.5H1.5Z" fill="#1f1f1f"/><path d="M10.5 1.8H13.5L12 3.6Z" fill="#1f1f1f"/><path d="M1.6 5V14.4H13.4V5" fill="none" stroke="#c8c8c8" stroke-width="1.2"/><path d="M4 8H11M4 10.5H9M4 12.5H10" fill="none" stroke="#c8c8c8" stroke-width="1"/></svg><div class="t " style="left:51.4px;top:503.5px;font-size:12.2px;letter-spacing:-0.27px;transform:scaleX(1.0114);transform-origin:0 50%;">ComboBox</div>
<svg style="left:20px;top:525.0px" width="15" height="15" viewBox="0 0 15 15"><path d="M4 3.5V0.6H14.4V14.4H10" fill="none" stroke="#c8c8c8" stroke-width="1.2"/><circle cx="4.5" cy="10.5" r="3.9" fill="none" stroke="#c8c8c8" stroke-width="1.2"/><circle cx="4.5" cy="10.5" r="1.4" fill="#c8c8c8"/><path d="M5 6A4.5 4.5 0 0 1 9.5 10.5" fill="none" stroke="#c8c8c8" stroke-width="1"/></svg><div class="t " style="left:51.4px;top:524.5px;font-size:12.2px;letter-spacing:-0.27px;transform:scaleX(1.0521);transform-origin:0 50%;">ContentControl</div>
<svg style="left:20px;top:546.0px" width="15" height="15" viewBox="0 0 15 15"><path d="M5 0H8V3H5ZM9 0H12V3H9ZM13 0H15.5V3H13ZM9 4H12V7H9ZM13 4H15.5V7H13ZM9 8H12V11H9ZM13 8H15.5V11H13Z" fill="#c8c8c8"/><path d="M0 6.5C0 4.8 7.5 4.8 7.5 6.5V14C7.5 15.7 0 15.7 0 14Z" fill="#75c5f0"/><path d="M0.3 6.7C0.5 8 7 8 7.2 6.7" fill="none" stroke="#1f1f1f" stroke-width="0.8"/></svg><div class="t " style="left:51.4px;top:545.5px;font-size:12.2px;letter-spacing:-0.27px;transform:scaleX(0.9774);transform-origin:0 50%;">DataGrid</div>
<svg style="left:20px;top:567.0px" width="15" height="15" viewBox="0 0 15 15"><path d="M1.1 1.1H13.9V14.4H1.1Z" fill="none" stroke="#c8c8c8" stroke-width="1.2"/><path d="M1 1H14V5H1Z" fill="#c8c8c8"/><path d="M9.5 2.2H12.7L11.1 4.2Z" fill="#1f1f1f"/><path d="M2.5 2H8V4H2.5Z" fill="#1f1f1f"/><path d="M3 7H5V9H3ZM6.5 7H8.5V9H6.5ZM10 7H12V9H10ZM3 10.5H5V12.5H3ZM6.5 10.5H8.5V12.5H6.5ZM10 10.5H12V12.5H10Z" fill="#c8c8c8"/></svg><div class="t " style="left:51.4px;top:566.5px;font-size:12.2px;letter-spacing:-0.27px;transform:scaleX(0.9761);transform-origin:0 50%;">DatePicker</div>
<svg style="left:20px;top:588.0px" width="15" height="15" viewBox="0 0 15 15"><path d="M0.6 0.6H14.4V14.4H0.6ZM0.6 4H14.4M4.5 4V14.4" fill="none" stroke="#c8c8c8" stroke-width="1.2"/></svg><div class="t " style="left:51.4px;top:587.5px;font-size:12.2px;letter-spacing:-0.27px;transform:scaleX(0.9829);transform-origin:0 50%;">DockPanel</div>
<svg style="left:20px;top:609.0px" width="15" height="15" viewBox="0 0 15 15"><path d="M5 4V0.6H11L14.4 4V13.4H10" fill="none" stroke="#c8c8c8" stroke-width="1.2"/><circle cx="5" cy="10.5" r="4.3" fill="none" stroke="#c8c8c8" stroke-width="1.2"/><path d="M5 7.5V10.5H8" fill="none" stroke="#c8c8c8" stroke-width="1.2"/></svg><div class="t " style="left:51.4px;top:608.5px;font-size:12.2px;letter-spacing:-0.27px;transform:scaleX(1.0164);transform-origin:0 50%;">DocumentViewer</div>
<svg style="left:20px;top:630.0px" width="15" height="15" viewBox="0 0 15 15"><ellipse cx="7.5" cy="7.5" rx="6.9" ry="4.6" fill="none" stroke="#c8c8c8" stroke-width="1.2"/></svg><div class="t " style="left:51.4px;top:629.5px;font-size:12.2px;letter-spacing:-0.27px;transform:scaleX(0.9648);transform-origin:0 50%;">Ellipse</div>
<svg style="left:20px;top:651.0px" width="15" height="15" viewBox="0 0 15 15"><circle cx="7.5" cy="7.5" r="6.5" fill="none" stroke="#c8c8c8" stroke-width="1.5"/><path d="M5 5L7.5 7.3L10 5M5 8L7.5 10.3L10 8" fill="none" stroke="#c8c8c8" stroke-width="1.2"/></svg><div class="t " style="left:51.4px;top:650.5px;font-size:12.2px;letter-spacing:-0.27px;transform:scaleX(0.9708);transform-origin:0 50%;">Expander</div>
<svg style="left:20px;top:672.0px" width="15" height="15" viewBox="0 0 15 15"><path d="M0.6 5.1H14.4V14.4H0.6Z" fill="none" stroke="#c8c8c8" stroke-width="1.2"/><path d="M3.5 5L7.5 1.2L11.5 5" fill="none" stroke="#c8c8c8" stroke-width="1.2"/></svg><div class="t " style="left:51.4px;top:671.5px;font-size:12.2px;letter-spacing:-0.27px;transform:scaleX(0.9692);transform-origin:0 50%;">Frame</div>
<svg style="left:20px;top:693.0px" width="15" height="15" viewBox="0 0 15 15"><path d="M2 1H5.3V4.3H2ZM6.3 1H9.6V4.3H6.3ZM10.6 1H13.9V4.3H10.6ZM2 5.3H5.3V8.6H2ZM6.3 5.3H9.6V8.6H6.3ZM10.6 5.3H13.9V8.6H10.6ZM2 9.6H5.3V12.9H2ZM6.3 9.6H9.6V12.9H6.3ZM10.6 9.6H13.9V12.9H10.6Z" fill="#c8c8c8"/></svg><div class="t " style="left:51.4px;top:692.5px;font-size:12.2px;letter-spacing:-0.27px;transform:scaleX(0.9606);transform-origin:0 50%;">Grid</div>
<svg style="left:20px;top:714.0px" width="15" height="15" viewBox="0 0 15 15"><path d="M7.5 0V15" fill="none" stroke="#c8c8c8" stroke-width="1.6"/><path d="M0.8 7.5H5.5M3.2 5L0.8 7.5L3.2 10M14.2 7.5H9.5M11.8 5L14.2 7.5L11.8 10" fill="none" stroke="#c8c8c8" stroke-width="1.2"/></svg><div class="t " style="left:51.4px;top:713.5px;font-size:12.2px;letter-spacing:-0.27px;transform:scaleX(1.0143);transform-origin:0 50%;">GridSplitter</div>
<svg style="left:20px;top:735.0px" width="15" height="15" viewBox="0 0 15 15"><path d="M3 2.6H0.6V14.4H14.4V2.6H11" fill="none" stroke="#c8c8c8" stroke-width="1.2"/><text x="7" y="5.5" font-family="Liberation Sans" font-weight="bold" font-size="6.5" text-anchor="middle" fill="#c8c8c8">XY</text></svg><div class="t " style="left:51.4px;top:734.5px;font-size:12.2px;letter-spacing:-0.27px;transform:scaleX(0.9826);transform-origin:0 50%;">GroupBox</div>
<svg style="left:20px;top:756.0px" width="15" height="15" viewBox="0 0 15 15"><path d="M0.6 0.6H14.4V13.4H0.6Z" fill="none" stroke="#c8c8c8" stroke-width="1.2"/><path d="M0.6 13.4V8.5L3.5 6L6.5 9L9 7.5L11 9.5L14.4 6.5V13.4Z" fill="#75c5f0"/><path d="M10.5 2.2L11.2 3.6L12.6 4.2L11.2 4.8L10.5 6.2L9.8 4.8L8.4 4.2L9.8 3.6Z" fill="#e8b46a"/></svg><div class="t " style="left:51.4px;top:755.5px;font-size:12.2px;letter-spacing:-0.27px;transform:scaleX(1.0014);transform-origin:0 50%;">Image</div>
<svg style="left:20px;top:777.0px" width="15" height="15" viewBox="0 0 15 15"><text x="7.5" y="14" font-family="Liberation Sans" font-weight="bold" font-size="18" text-anchor="middle" fill="#c8c8c8">A</text></svg><div class="t " style="left:51.4px;top:776.5px;font-size:12.2px;letter-spacing:-0.27px;transform:scaleX(0.9685);transform-origin:0 50%;">Label</div>
<svg style="left:20px;top:798.0px" width="15" height="15" viewBox="0 0 15 15"><path d="M0.6 1.6H14.4V14.4H0.6Z" fill="none" stroke="#c8c8c8" stroke-width="1.2"/><path d="M2.5 4.5H8M2.5 7H6.5M2.5 9.5H8M2.5 12H6.5" fill="none" stroke="#c8c8c8" stroke-width="1"/><path d="M10 2.2H13.8V7.2H10ZM10 8.8H13.8V13.8H10Z" fill="#75c5f0"/><path d="M10.8 5.8H13L11.9 3.6ZM10.8 10.2H13L11.9 12.4Z" fill="#1f1f1f"/></svg><div class="t " style="left:51.4px;top:797.5px;font-size:12.2px;letter-spacing:-0.27px;transform:scaleX(0.9602);transform-origin:0 50%;">ListBox</div>
<svg style="left:20px;top:819.0px" width="15" height="15" viewBox="0 0 15 15"><path d="M0.6 1.1H14.4V13.9H0.6Z" fill="none" stroke="#c8c8c8" stroke-width="1.2"/><path d="M3 4H11M3 6.5H9M3 9H11M3 11.5H9" fill="none" stroke="#c8c8c8" stroke-width="1"/></svg><div class="t " style="left:51.4px;top:818.5px;font-size:12.2px;letter-spacing:-0.27px;transform:scaleX(0.9873);transform-origin:0 50%;">ListView</div>
<svg style="left:20px;top:840.0px" width="15" height="15" viewBox="0 0 15 15"><path d="M0.6 2.6H14.4V12.9H0.6Z" fill="none" stroke="#c8c8c8" stroke-width="1.2"/><path d="M5.5 5V10.5L10 7.7Z" fill="none" stroke="#c8c8c8" stroke-width="1"/><path d="M2.5 3.5V12.5M12.5 3.5V12.5" stroke="#c8c8c8" stroke-width="1" stroke-dasharray="1.2 1.2"/></svg><div class="t " style="left:51.4px;top:839.5px;font-size:12.2px;letter-spacing:-0.27px;transform:scaleX(1.0115);transform-origin:0 50%;">MediaElement</div>
<svg style="left:20px;top:861.0px" width="15" height="15" viewBox="0 0 15 15"><path d="M1 0.6H10.5V3H1Z" fill="none" stroke="#c8c8c8" stroke-width="1.1"/><path d="M0.6 4.6H14.4V13.9H0.6Z" fill="none" stroke="#c8c8c8" stroke-width="1.2"/><path d="M3 7.5H10M3 10.5H7.5" fill="none" stroke="#c8c8c8" stroke-width="1.1"/></svg><div class="t " style="left:51.4px;top:860.5px;font-size:12.2px;letter-spacing:-0.27px;transform:scaleX(1.0396);transform-origin:0 50%;">Menu</div>
<svg style="left:20px;top:882.0px" width="15" height="15" viewBox="0 0 15 15"><path d="M0.6 1.6H14.4V13H0.6Z" fill="none" stroke="#c8c8c8" stroke-width="1.2"/><text x="7.5" y="12.5" font-family="Liberation Sans" font-weight="bold" font-size="11" text-anchor="middle" fill="#c8c8c8">**</text></svg><div class="t " style="left:51.4px;top:881.5px;font-size:12.2px;letter-spacing:-0.27px;transform:scaleX(0.9593);transform-origin:0 50%;">PasswordBox</div>
</div>
<div class="a" style="left:202px;top:116px;width:16.6px;height:894px;background:#2e2e2e;"></div>
<svg style="left:206.5px;top:123.5px" width="9" height="5" viewBox="0 0 9 5"><path d="M0 5H9L4.5 0Z" fill="#9a9a9a"/></svg>
<div class="a" style="left:206px;top:134px;width:9px;height:527px;background:#4d4d4d;"></div>
<svg style="left:206.5px;top:998.5px" width="9" height="5" viewBox="0 0 9 5"><path d="M0 0H9L4.5 5Z" fill="#9a9a9a"/></svg>
<div class="a" style="left:228px;top:73px;width:85px;height:19px;background:#2b2b2b;"></div>
<div class="t " style="left:232.5px;top:74px;font-size:12.2px;letter-spacing:-0.27px;transform:scaleX(1.0714);transform-origin:0 50%;color:#b4b4b4">Output</div>
<div class="a" style="left:314px;top:72px;width:155px;height:21px;background:#3a3a3a;"></div>
<div class="a" style="left:314px;top:72px;width:155px;height:2px;background:#7160e8;"></div>
<div class="t " style="left:318.5px;top:74.5px;font-size:12.2px;letter-spacing:-0.27px;transform:scaleX(1.0180);transform-origin:0 50%;font-weight:bold;color:#ffffff">MainWindow.xaml*</div>
<svg style="left:436px;top:78px" width="9" height="9" viewBox="0 0 9 9"><path d="M3.5 1.5V7.5M3.5 2.5H8.5V6.5H3.5M0 4.5H3.5" fill="none" stroke="#e6e6e6" stroke-width="1.1"/><path d="M3.5 5.5H8.5V6.5H3.5Z" fill="#e6e6e6"/></svg>
<svg style="left:454.5px;top:78px" width="9" height="9" viewBox="0 0 9 9"><path d="M0.5 0.5L8.5 8.5M8.5 0.5L0.5 8.5" stroke="#e6e6e6" stroke-width="1.3"/></svg>
<div class="a" style="left:470px;top:73px;width:161px;height:19px;background:#2b2b2b;"></div>
<div class="t " style="left:474px;top:74px;font-size:12.2px;letter-spacing:-0.27px;transform:scaleX(1.0455);transform-origin:0 50%;color:#b4b4b4">MainWindow.xaml.cs</div>
<svg style="left:1657.0px;top:82.0px" width="8" height="4" viewBox="0 0 8 4"><path d="M0 0H8L4.0 4Z" fill="#e0e0e0"/></svg>
<svg style="left:1673.4px;top:76.5px" width="11" height="11" viewBox="0 0 11 11"><circle cx="5.5" cy="5.5" r="2.9" fill="none" stroke="#e0e0e0" stroke-width="1.9"/><circle cx="5.5" cy="5.5" r="4.5" fill="none" stroke="#e0e0e0" stroke-width="1.8" stroke-dasharray="1.7 1.834"/></svg>
<div class="a" style="left:227px;top:92px;width:1458.3px;height:2.3px;background:#7160e8;"></div>
<div class="a" style="left:227px;top:94.3px;width:1458.3px;height:21px;background:#383838;"></div>
<div class="a" style="left:916px;top:95px;width:2px;height:20px;background:#2b2b2b;"></div>
<div class="a" style="left:1606px;top:94.3px;width:79.3px;height:21px;background:#2d2d2d;border-left:1px solid #3f3f3f;border-bottom:1px solid #3f3f3f"></div>
<svg style="left:231px;top:99px" width="14" height="10" viewBox="0 0 14 10"><path d="M0.6 0.6H13.4V9.4H0.6Z" fill="none" stroke="#e6e6e6" stroke-width="1.2"/><path d="M5 3L3 5L5 7M9 3L11 5L9 7" fill="none" stroke="#e6e6e6" stroke-width="1"/></svg>
<svg style="left:922px;top:99px" width="14" height="10" viewBox="0 0 14 10"><path d="M0.6 0.6H13.4V9.4H0.6Z" fill="none" stroke="#e6e6e6" stroke-width="1.2"/><path d="M5 3L3 5L5 7M9 3L11 5L9 7" fill="none" stroke="#e6e6e6" stroke-width="1"/></svg>
<div class="t " style="left:248px;top:97px;font-size:12.2px;letter-spacing:-0.27px;transform:scaleX(0.9659);transform-origin:0 50%;">StackPanel</div>
<div class="t " style="left:939px;top:97px;font-size:12.2px;letter-spacing:-0.27px;transform:scaleX(0.9659);transform-origin:0 50%;">StackPanel</div>
<svg style="left:905.0px;top:103.5px" width="6" height="3" viewBox="0 0 6 3"><path d="M0 0H6L3.0 3Z" fill="#d6d6d6"/></svg>
<svg style="left:1596.0px;top:103.5px" width="6" height="3" viewBox="0 0 6 3"><path d="M0 0H6L3.0 3Z" fill="#d6d6d6"/></svg>
<svg style="left:1640px;top:98px" width="11" height="13" viewBox="0 0 11 13"><path d="M0 5.2H11M0 7.8H11" stroke="#e6e6e6" stroke-width="1"/><path d="M5.5 0.5V4.5M5.5 8.5V12.5M3.7 2.3L5.5 0.5L7.3 2.3M3.7 10.7L5.5 12.5L7.3 10.7" fill="none" stroke="#e6e6e6" stroke-width="1"/></svg>
<div class="a" style="left:226px;top:94px;width:1px;height:917px;background:#3d3d3d;"></div>
<div class="a" style="left:226px;top:1010px;width:1460px;height:1px;background:#3d3d3d;"></div>
<div class="a" style="left:1685.3px;top:94px;width:1px;height:917px;background:#3d3d3d;"></div>
<div class="a" style="left:227px;top:115.3px;width:1380px;height:568px;background:#1e1e1e;"></div>
<div class="a" style="left:227px;top:115.3px;width:25px;height:568px;background:#333333;"></div>
<div class="a" style="left:327px;top:115.3px;width:7px;height:568px;background:#5cb85c;"></div>
<div class="a" style="left:327px;top:512px;width:7px;height:122.5px;background:#1e1e1e;border:1px solid #c9a227"></div>
<div class="a" style="left:344px;top:116px;width:2px;height:568px;background:#a8a8a8;"></div>
<div class="a" style="left:344px;top:118px;width:7px;height:2px;background:#a8a8a8;"></div>
<div class="a" style="left:344px;top:168px;width:7px;height:2px;background:#a8a8a8;"></div>
<div class="a" style="left:344px;top:217px;width:7px;height:2px;background:#a8a8a8;"></div>
<div class="a" style="left:344px;top:266px;width:7px;height:2px;background:#a8a8a8;"></div>
<div class="a" style="left:344px;top:681px;width:7px;height:2px;background:#a8a8a8;"></div>
<div class="a" style="left:338px;top:321.2px;width:13px;height:13px;background:#1e1e1e;border:1px solid #b0b0b0"></div>
<div class="a" style="left:341px;top:326.97px;width:7px;height:1.4px;background:#d0d0d0;"></div>
<div class="a" style="left:338px;top:467.8px;width:13px;height:13px;background:#1e1e1e;border:1px solid #b0b0b0"></div>
<div class="a" style="left:341px;top:473.61000000000007px;width:7px;height:1.4px;background:#d0d0d0;"></div>
<div class="guide" style="left:356.8px;top:116.0px;height:567.6px;background-position:0 4.40px"></div>
<div class="guide" style="left:401.0px;top:116.0px;height:567.6px;background-position:0 4.40px"></div>
<div class="guide" style="left:445.1px;top:116.0px;height:126.6px;background-position:0 4.40px"></div>
<div class="guide" style="left:445.1px;top:340.4px;height:343.2px;background-position:0 6.21px"></div>
<div class="guide" style="left:489.3px;top:116.0px;height:77.8px;background-position:0 4.40px"></div>
<div class="guide" style="left:489.3px;top:487.0px;height:171.1px;background-position:0 7.47px"></div>
<div class="guide" style="left:533.4px;top:116.0px;height:28.9px;background-position:0 4.40px"></div>
<div class="a" style="left:352px;top:635px;width:1252px;height:22.5px;border:2px solid #464646"></div>
<div class="ln" style="top:122.45px">31</div>
<div class="ln" style="top:146.89px">32</div>
<div class="ln" style="top:171.33px">33</div>
<div class="ln" style="top:195.77px">34</div>
<div class="ln" style="top:220.21px">35</div>
<div class="ln" style="top:244.65px">36</div>
<div class="ln" style="top:269.09px">37</div>
<div class="ln" style="top:293.53px">38</div>
<div class="ln" style="top:317.97px">39</div>
<div class="ln" style="top:342.41px">40</div>
<div class="ln" style="top:366.85px">41</div>
<div class="ln" style="top:391.29px">42</div>
<div class="ln" style="top:415.73px">43</div>
<div class="ln" style="top:440.17px">44</div>
<div class="ln" style="top:464.61px">45</div>
<div class="ln" style="top:489.05px">46</div>
<div class="ln" style="top:513.49px">47</div>
<div class="ln" style="top:537.93px">48</div>
<div class="ln" style="top:562.37px">49</div>
<div class="ln" style="top:586.81px">50</div>
<div class="ln" style="top:611.25px">51</div>
<div class="ln" style="top:635.69px;color:#ffffff;font-weight:bold">52</div>
<div class="ln" style="top:660.13px">53</div>
<div class="a" style="left:0;top:116px;width:1606.5px;height:567px;overflow:hidden"><div class="a" style="left:0;top:-116px">
<div class="code" style="left:529.69px;top:144.14px"><span class="p">&lt;/</span><span class="k">ComboBox.ItemTemplate</span><span class="p">&gt;</span></div>
<div class="code" style="left:485.84px;top:193.02px"><span class="p">&lt;/</span><span class="k">ComboBox</span><span class="p">&gt;</span></div>
<div class="code" style="left:442.00px;top:241.90px"><span class="p">&lt;/</span><span class="k">StackPanel</span><span class="p">&gt;</span></div>
<div class="code" style="left:442.00px;top:315.22px"><span class="p">&lt;</span><span class="k">StackPanel</span> <span class="at">Grid.Column</span><span class="p">=</span><span class="v">&quot;1&quot;</span> <span class="at">Margin</span><span class="p">=</span><span class="v">&quot;</span><span class="hint">[all:]</span><span class="v">100&quot;</span><span class="p">&gt;</span></div>
<div class="code" style="left:485.84px;top:364.10px"><span class="p">&lt;</span><span class="k">Label</span> <span class="at">FontSize</span><span class="p">=</span><span class="v">&quot;16&quot;</span> <span class="at">FontWeight</span><span class="p">=</span><span class="v">&quot;ExtraBold&quot;</span><span class="p">&gt;</span><span class="sq">Païssos<svg style="left:0;top:17.9px;overflow:hidden" width="76.7" height="6"><path d="M0 3q2.325 -3.6 4.65 0t4.65 0t4.65 0t4.65 0t4.65 0t4.65 0t4.65 0t4.65 0t4.65 0t4.65 0t4.65 0t4.65 0t4.65 0t4.65 0t4.65 0t4.65 0t4.65 0t4.65 0" fill="none" stroke="#1fe01f" stroke-width="1.7"/></svg></span><span class="p">&lt;/</span><span class="k">Label</span><span class="p">&gt;</span></div>
<div class="code" style="left:485.84px;top:388.54px"><span class="p">&lt;</span><span class="k">CheckBox</span> <span class="at">Name</span><span class="p">=</span><span class="v">&quot;TotesP&quot;</span> <span class="at">IsThreeState</span><span class="p">=</span><span class="v">&quot;True&quot;</span> <span class="at">Checked</span><span class="p">=</span><span class="v">&quot;TotesP_Checked&quot;</span> <span class="at">Unchecked</span><span class="p">=</span><span class="v">&quot;TotesP_Unchecked&quot;</span><span class="p">&gt;</span><span class="sq">Agregar<svg style="left:0;top:17.9px;overflow:hidden" width="76.7" height="6"><path d="M0 3q2.325 -3.6 4.65 0t4.65 0t4.65 0t4.65 0t4.65 0t4.65 0t4.65 0t4.65 0t4.65 0t4.65 0t4.65 0t4.65 0t4.65 0t4.65 0t4.65 0t4.65 0t4.65 0t4.65 0" fill="none" stroke="#1fe01f" stroke-width="1.7"/></svg></span> Totes<span class="p">&lt;/</span><span class="k">CheckBox</span><span class="p">&gt;</span></div>
<div class="code" style="left:485.84px;top:461.86px"><span class="p">&lt;</span><span class="k">StackPanel</span> <span class="at">Margin</span><span class="p">=</span><span class="v">&quot;</span><span class="hint">[all:]</span><span class="v">15&quot;</span><span class="p">&gt;</span></div>
<div class="code" style="left:529.69px;top:510.74px"><span class="p">&lt;</span><span class="k">CheckBox</span> <span class="at">Name</span><span class="p">=</span><span class="v">&quot;Angles&quot;</span> <span class="at">Checked</span><span class="p">=</span><span class="v">&quot;IndividualChecked&quot;</span><span class="p">&gt;</span><span class="sq">Anglès<svg style="left:0;top:17.9px;overflow:hidden" width="65.8" height="6"><path d="M0 3q2.325 -3.6 4.65 0t4.65 0t4.65 0t4.65 0t4.65 0t4.65 0t4.65 0t4.65 0t4.65 0t4.65 0t4.65 0t4.65 0t4.65 0t4.65 0t4.65 0t4.65 0" fill="none" stroke="#1fe01f" stroke-width="1.7"/></svg></span><span class="p">&lt;/</span><span class="k">CheckBox</span><span class="p">&gt;</span></div>
<div class="code" style="left:529.69px;top:535.18px"><span class="p">&lt;</span><span class="k">CheckBox</span> <span class="at">Name</span><span class="p">=</span><span class="v">&quot;<span class="sq">Girona<svg style="left:0;top:17.9px;overflow:hidden" width="65.8" height="6"><path d="M0 3q2.325 -3.6 4.65 0t4.65 0t4.65 0t4.65 0t4.65 0t4.65 0t4.65 0t4.65 0t4.65 0t4.65 0t4.65 0t4.65 0t4.65 0t4.65 0t4.65 0t4.65 0" fill="none" stroke="#1fe01f" stroke-width="1.7"/></svg></span>&quot;</span> <span class="at">Checked</span><span class="p">=</span><span class="v">&quot;IndividualChecked&quot;</span><span class="p">&gt;</span><span class="sq">Girona<svg style="left:0;top:17.9px;overflow:hidden" width="65.8" height="6"><path d="M0 3q2.325 -3.6 4.65 0t4.65 0t4.65 0t4.65 0t4.65 0t4.65 0t4.65 0t4.65 0t4.65 0t4.65 0t4.65 0t4.65 0t4.65 0t4.65 0t4.65 0t4.65 0" fill="none" stroke="#1fe01f" stroke-width="1.7"/></svg></span><span class="p">&lt;/</span><span class="k">CheckBox</span><span class="p">&gt;</span></div>
<div class="code" style="left:529.69px;top:559.62px"><span class="p">&lt;</span><span class="k">CheckBox</span> <span class="at">Name</span><span class="p">=</span><span class="v">&quot;<span class="sq">Berga<svg style="left:0;top:17.9px;overflow:hidden" width="54.8" height="6"><path d="M0 3q2.325 -3.6 4.65 0t4.65 0t4.65 0t4.65 0t4.65 0t4.65 0t4.65 0t4.65 0t4.65 0t4.65 0t4.65 0t4.65 0t4.65 0" fill="none" stroke="#1fe01f" stroke-width="1.7"/></svg></span>&quot;</span> <span class="at">Checked</span><span class="p">=</span><span class="v">&quot;IndividualChecked&quot;</span><span class="p">&gt;</span><span class="sq">Berga<svg style="left:0;top:17.9px;overflow:hidden" width="54.8" height="6"><path d="M0 3q2.325 -3.6 4.65 0t4.65 0t4.65 0t4.65 0t4.65 0t4.65 0t4.65 0t4.65 0t4.65 0t4.65 0t4.65 0t4.65 0t4.65 0" fill="none" stroke="#1fe01f" stroke-width="1.7"/></svg></span><span class="p">&lt;/</span><span class="k">CheckBox</span><span class="p">&gt;</span></div>
<div class="code" style="left:529.69px;top:584.06px"><span class="p">&lt;</span><span class="k">CheckBox</span> <span class="at">Name</span><span class="p">=</span><span class="v">&quot;<span class="sq">Olot<svg style="left:0;top:17.9px;overflow:hidden" width="43.8" height="6"><path d="M0 3q2.325 -3.6 4.65 0t4.65 0t4.65 0t4.65 0t4.65 0t4.65 0t4.65 0t4.65 0t4.65 0t4.65 0t4.65 0" fill="none" stroke="#1fe01f" stroke-width="1.7"/></svg></span>&quot;</span> <span class="at">Checked</span><span class="p">=</span><span class="v">&quot;IndividualChecked&quot;</span><span class="p">&gt;</span><span class="sq">Olot<svg style="left:0;top:17.9px;overflow:hidden" width="43.8" height="6"><path d="M0 3q2.325 -3.6 4.65 0t4.65 0t4.65 0t4.65 0t4.65 0t4.65 0t4.65 0t4.65 0t4.65 0t4.65 0t4.65 0" fill="none" stroke="#1fe01f" stroke-width="1.7"/></svg></span><span class="p">&lt;/</span><span class="k">CheckBox</span><span class="p">&gt;</span></div>
<div class="code" style="left:529.69px;top:608.50px"><span class="p">&lt;</span><span class="k">CheckBox</span> <span class="at">Name</span><span class="p">=</span><span class="v">&quot;<span class="sq">Ripoll<svg style="left:0;top:17.9px;overflow:hidden" width="65.8" height="6"><path d="M0 3q2.325 -3.6 4.65 0t4.65 0t4.65 0t4.65 0t4.65 0t4.65 0t4.65 0t4.65 0t4.65 0t4.65 0t4.65 0t4.65 0t4.65 0t4.65 0t4.65 0t4.65 0" fill="none" stroke="#1fe01f" stroke-width="1.7"/></svg></span>&quot;</span> <span class="at">Checked</span><span class="p">=</span><span class="v">&quot;IndividualChecked&quot;</span><span class="p">&gt;</span><span class="sq">Ripoll<svg style="left:0;top:17.9px;overflow:hidden" width="65.8" height="6"><path d="M0 3q2.325 -3.6 4.65 0t4.65 0t4.65 0t4.65 0t4.65 0t4.65 0t4.65 0t4.65 0t4.65 0t4.65 0t4.65 0t4.65 0t4.65 0t4.65 0t4.65 0t4.65 0" fill="none" stroke="#1fe01f" stroke-width="1.7"/></svg></span><span class="p">&lt;/</span><span class="k">CheckBox</span><span class="p">&gt;</span></div>
<div class="code" style="left:485.84px;top:657.38px"><span class="p">&lt;/</span><span class="k">StackPanel</span><span class="p">&gt;</span></div>
</div></div>
<svg style="left:0px;top:0px" width="1920" height="1080" viewBox="0 0 1920 1080"><path d="M1280.8 480.2L1099.2 530.4" stroke="#fff" stroke-width="2"/><path d="M1098.1 526.2L1079.0 536.0L1100.4 534.6Z" fill="#fff"/><path d="M659.9 538.75L761.0 560.4" stroke="#fff" stroke-width="2"/><path d="M760.2 564.3L778.6 564.2L761.8 556.5Z" fill="#fff"/><path d="M734.9 542.2L780.4 548.7" stroke="#fff" stroke-width="2"/><path d="M779.8 552.8L798.8 551.2L781.0 544.5Z" fill="#fff"/><path d="M645 645.4L742.6 593.7" stroke="#fff" stroke-width="2"/><path d="M744.5 597.3L758.5 585.3L740.7 590.2Z" fill="#fff"/><path d="M751 579L757 575.5L764.5 592" fill="none" stroke="#fff" stroke-width="1.3"/><path d="M702 657.5L768.7 629.9" stroke="#fff" stroke-width="2"/><path d="M770.3 633.8L785.3 623.0L767.1 626.0Z" fill="#fff"/><path d="M1239 581.7L1100.1 571.3" stroke="#fff" stroke-width="2"/><path d="M1100.3 567.9L1082.5 570.0L1099.8 574.7Z" fill="#fff"/><path d="M1137 626.6L1087.9 607.4" stroke="#fff" stroke-width="2"/><path d="M1089.7 602.8L1070.2 600.5L1086.1 612.1Z" fill="#fff"/><path d="M1104.2 639.2L1091.7 633.2" stroke="#fff" stroke-width="2"/><path d="M1093.9 628.7L1077.3 626.2L1089.5 637.7Z" fill="#fff"/></svg>
<div class="a" style="left:1606px;top:115.3px;width:78.8px;height:568px;background:#3e3e42;"></div>
<div class="a" style="left:1606px;top:115.3px;width:78.8px;height:17.7px;background:#2d2d2d;"></div>
<svg style="left:1639.5px;top:118.5px" width="12" height="11.5" viewBox="0 0 12 11.5"><path d="M6 0.3L11.7 11H0.3Z" fill="#f5c800" stroke="#f5c800" stroke-width="0.6" stroke-linejoin="round"/><path d="M6 3.6V7.6M6 8.5V10.1" stroke="#000" stroke-width="1.5"/></svg>
<svg style="left:1641.0px;top:138.0px" width="9" height="5" viewBox="0 0 9 5"><path d="M0 5H9L4.5 0Z" fill="#b0b0b0"/></svg>
<svg style="left:1641.0px;top:673.0px" width="9" height="5" viewBox="0 0 9 5"><path d="M0 0H9L4.5 5Z" fill="#b0b0b0"/></svg>
<div class="a" style="left:1611.5px;top:330.6px;width:73px;height:146px;background:#000000;border-radius:2px;border:1px solid #555"></div>
<div class="a" style="left:1606px;top:195px;width:6px;height:312px;background:#5cb85c;"></div>
<div class="a" style="left:1606px;top:433.6px;width:6px;height:35px;background:#3e3e42;border:1px solid #c9a227"></div>
<div class="a" style="left:1606px;top:468.4px;width:79.3px;height:2px;background:#ffffff;"></div>
<div class="a" style="left:1617.4px;top:150.0px;width:4.6px;height:1.4px;background:#e8e8e8;opacity:0.55"></div>
<div class="a" style="left:1622.5px;top:150.0px;width:22.5px;height:1.4px;background:#7fb4e0;opacity:0.55"></div>
<div class="a" style="left:1621.5px;top:156.3px;width:35.5px;height:1.4px;background:#7fb4e0;opacity:0.55"></div>
<div class="a" style="left:1621.5px;top:163.3px;width:29.9px;height:1.4px;background:#7fb4e0;opacity:0.55"></div>
<div class="a" style="left:1621.5px;top:169.3px;width:33.2px;height:1.4px;background:#7fb4e0;opacity:0.55"></div>
<div class="a" style="left:1621.5px;top:175.5px;width:38.5px;height:1.4px;background:#7fb4e0;opacity:0.55"></div>
<div class="a" style="left:1621.5px;top:181.3px;width:25.5px;height:1.4px;background:#5f7f9a;opacity:0.55"></div>
<div class="a" style="left:1621.5px;top:187.7px;width:8.1px;height:1.4px;background:#7fb4e0;opacity:0.55"></div>
<div class="a" style="left:1621.5px;top:193.8px;width:23.5px;height:1.4px;background:#7fb4e0;opacity:0.55"></div>
<div class="a" style="left:1620.0px;top:200.3px;width:2.5px;height:1.4px;background:#e8e8e8;opacity:0.55"></div>
<div class="a" style="left:1622.0px;top:213.3px;width:12.7px;height:1.4px;background:#e8e8e8;opacity:0.55"></div>
<div class="a" style="left:1624.0px;top:219.3px;width:26.6px;height:1.4px;background:#e8e8e8;opacity:0.55"></div>
<div class="a" style="left:1624.0px;top:225.0px;width:25.4px;height:1.4px;background:#e8e8e8;opacity:0.55"></div>
<div class="a" style="left:1622.0px;top:231.1px;width:12.7px;height:1.4px;background:#e8e8e8;opacity:0.55"></div>
<div class="a" style="left:1622.0px;top:243.7px;width:5.6px;height:1.4px;background:#e8e8e8;opacity:0.55"></div>
<div class="a" style="left:1624.0px;top:255.9px;width:7.0px;height:1.4px;background:#e8e8e8;opacity:0.55"></div>
<div class="a" style="left:1631.5px;top:255.9px;width:6.9px;height:1.4px;background:#7fb4e0;opacity:0.55"></div>
<div class="a" style="left:1626.0px;top:269.2px;width:11.8px;height:1.4px;background:#e8e8e8;opacity:0.55"></div>
<div class="a" style="left:1628.0px;top:281.0px;width:7.0px;height:1.4px;background:#e8e8e8;opacity:0.55"></div>
<div class="a" style="left:1630.6px;top:294.2px;width:6.4px;height:1.4px;background:#e8e8e8;opacity:0.55"></div>
<div class="a" style="left:1637.5px;top:294.2px;width:12.5px;height:1.4px;background:#7fb4e0;opacity:0.55"></div>
<div class="a" style="left:1632.7px;top:306.3px;width:7.3px;height:1.4px;background:#e8e8e8;opacity:0.55"></div>
<div class="a" style="left:1640.5px;top:306.3px;width:14.5px;height:1.4px;background:#d8b45a;opacity:0.55"></div>
<div class="a" style="left:1655.5px;top:306.3px;width:14.2px;height:1.4px;background:#7fb4e0;opacity:0.55"></div>
<div class="a" style="left:1630.6px;top:319.1px;width:6.1px;height:1.4px;background:#e8e8e8;opacity:0.55"></div>
<div class="a" style="left:1628.6px;top:331.0px;width:7.8px;height:1.4px;background:#e8e8e8;opacity:0.55"></div>
<div class="a" style="left:1626.7px;top:344.3px;width:11.6px;height:1.4px;background:#e8e8e8;opacity:0.55"></div>
<div class="a" style="left:1624.7px;top:355.9px;width:4.7px;height:1.4px;background:#e8e8e8;opacity:0.55"></div>
<div class="a" style="left:1622.0px;top:368.8px;width:5.5px;height:1.4px;background:#e8e8e8;opacity:0.55"></div>
<div class="a" style="left:1622.0px;top:388.2px;width:6.0px;height:1.4px;background:#e8e8e8;opacity:0.55"></div>
<div class="a" style="left:1628.5px;top:388.2px;width:14.5px;height:1.4px;background:#7fb4e0;opacity:0.55"></div>
<div class="a" style="left:1624.0px;top:399.9px;width:3.0px;height:1.4px;background:#e8e8e8;opacity:0.55"></div>
<div class="a" style="left:1627.5px;top:399.9px;width:18.5px;height:1.4px;background:#7fb4e0;opacity:0.55"></div>
<div class="a" style="left:1646.5px;top:399.9px;width:9.3px;height:1.4px;background:#e8e8e8;opacity:0.55"></div>
<div class="a" style="left:1624.0px;top:406.1px;width:4.5px;height:1.4px;background:#e8e8e8;opacity:0.55"></div>
<div class="a" style="left:1629.0px;top:406.1px;width:46.3px;height:1.4px;background:#7fb4e0;opacity:0.55"></div>
<div class="a" style="left:1624.0px;top:425.2px;width:6.0px;height:1.4px;background:#e8e8e8;opacity:0.55"></div>
<div class="a" style="left:1630.5px;top:425.2px;width:5.9px;height:1.4px;background:#7fb4e0;opacity:0.55"></div>
<div class="a" style="left:1622.0px;top:488.2px;width:5.5px;height:1.4px;background:#e8e8e8;opacity:0.55"></div>
<div class="a" style="left:1624.7px;top:474.9px;width:5.9px;height:1.4px;background:#e8e8e8;opacity:0.55"></div>
<div class="a" style="left:1619.7px;top:506.1px;width:2.3px;height:1.4px;background:#e8e8e8;opacity:0.55"></div>
<div class="a" style="left:1617.7px;top:513.1px;width:3.9px;height:1.4px;background:#e8e8e8;opacity:0.55"></div>
<div class="a" style="left:1626.0px;top:438.0px;width:5.0px;height:1.4px;background:#e8e8e8;opacity:0.55"></div>
<div class="a" style="left:1631.5px;top:438.0px;width:23.5px;height:1.4px;background:#7fb4e0;opacity:0.55"></div>
<div class="a" style="left:1655.5px;top:438.0px;width:8.1px;height:1.4px;background:#e8e8e8;opacity:0.55"></div>
<div class="a" style="left:1626.0px;top:444.1px;width:5.0px;height:1.4px;background:#e8e8e8;opacity:0.55"></div>
<div class="a" style="left:1631.5px;top:444.1px;width:23.5px;height:1.4px;background:#7fb4e0;opacity:0.55"></div>
<div class="a" style="left:1655.5px;top:444.1px;width:8.1px;height:1.4px;background:#e8e8e8;opacity:0.55"></div>
<div class="a" style="left:1626.0px;top:450.2px;width:5.0px;height:1.4px;background:#e8e8e8;opacity:0.55"></div>
<div class="a" style="left:1631.5px;top:450.2px;width:23.5px;height:1.4px;background:#7fb4e0;opacity:0.55"></div>
<div class="a" style="left:1655.5px;top:450.2px;width:8.1px;height:1.4px;background:#e8e8e8;opacity:0.55"></div>
<div class="a" style="left:1626.0px;top:456.3px;width:5.0px;height:1.4px;background:#e8e8e8;opacity:0.55"></div>
<div class="a" style="left:1631.5px;top:456.3px;width:23.5px;height:1.4px;background:#7fb4e0;opacity:0.55"></div>
<div class="a" style="left:1655.5px;top:456.3px;width:8.1px;height:1.4px;background:#e8e8e8;opacity:0.55"></div>
<div class="a" style="left:1626.0px;top:462.9px;width:5.0px;height:1.4px;background:#e8e8e8;opacity:0.55"></div>
<div class="a" style="left:1631.5px;top:462.9px;width:23.5px;height:1.4px;background:#7fb4e0;opacity:0.55"></div>
<div class="a" style="left:1655.5px;top:462.9px;width:8.1px;height:1.4px;background:#e8e8e8;opacity:0.55"></div>
<div class="a" style="left:1675.4px;top:181px;width:10px;height:2.2px;background:#c8860a;"></div>
<div class="a" style="left:1675.4px;top:306.5px;width:10px;height:2.2px;background:#c8860a;"></div>
<div class="a" style="left:1675.4px;top:256px;width:10px;height:2.2px;background:#138a13;"></div>
<div class="a" style="left:1675.4px;top:400.4px;width:10px;height:2px;background:#138a13;"></div>
<div class="a" style="left:1675.4px;top:405.8px;width:10px;height:2px;background:#138a13;"></div>
<div class="a" style="left:1675.4px;top:432.6px;width:10px;height:2px;background:#138a13;"></div>
<div class="a" style="left:1675.4px;top:441.6px;width:10px;height:2px;background:#138a13;"></div>
<div class="a" style="left:1675.4px;top:450.5px;width:10px;height:2px;background:#138a13;"></div>
<div class="a" style="left:1675.4px;top:456.4px;width:10px;height:2px;background:#138a13;"></div>
<div class="a" style="left:1675.4px;top:459.9px;width:10px;height:2px;background:#138a13;"></div>
<div class="a" style="left:227px;top:682.7px;width:1458.3px;height:15.3px;background:#2d2d2d;"></div>
<div class="a" style="left:227px;top:683.5px;width:59px;height:14px;background:#262626;border:1px solid #3a3a3a"></div>
<div class="t " style="left:229.5px;top:682.8px;font-size:11.6px">144 %</div>
<svg style="left:278.0px;top:689.5px" width="6" height="3" viewBox="0 0 6 3"><path d="M0 0H6L3.0 3Z" fill="#d6d6d6"/></svg>
<svg style="left:293.5px;top:686.5px" width="4" height="8" viewBox="0 0 4 8"><path d="M4 0V8L0 4.0Z" fill="#b0b0b0"/></svg>
<div class="a" style="left:303.8px;top:686.8px;width:828.5px;height:7.6px;background:#4d4d4d;"></div>
<svg style="left:1479.0px;top:686.5px" width="4" height="8" viewBox="0 0 4 8"><path d="M0 0V8L4 4.0Z" fill="#b0b0b0"/></svg>
<div class="t " style="left:1512px;top:682.8px;font-size:11.6px">Ln: 52</div>
<div class="t " style="left:1560px;top:682.8px;font-size:11.6px">Ch: 17</div>
<div class="a" style="left:1601px;top:684px;width:1px;height:13px;background:#3f3f3f;"></div>
<div class="a" style="left:1640px;top:684px;width:1px;height:13px;background:#3f3f3f;"></div>
<div class="t " style="left:1611px;top:682.8px;font-size:11.6px">SPC</div>
<div class="t " style="left:1650px;top:682.8px;font-size:11.6px">CRLF</div>
<div class="a" style="left:227px;top:698px;width:1458.3px;height:22.4px;background:#2e2e2e;"></div>
<svg style="left:236px;top:698.5px" width="78" height="18.5" viewBox="0 0 78 18.5"><path d="M0 0H78L60.5 18.5H3A3 3 0 0 1 0 15.5Z" fill="#3a3a3a"/></svg>
<svg style="left:242px;top:702.5px" width="9.5" height="9.5" viewBox="0 0 9.5 9.5"><path d="M0.6 0.6H8.9V8.9H0.6Z" fill="none" stroke="#e6e6e6" stroke-width="1.1"/><path d="M4 3.2L2.8 4.75L4 6.3M5.5 3.2L6.7 4.75L5.5 6.3" fill="none" stroke="#e6e6e6" stroke-width="0.8"/></svg>
<div class="t " style="left:255.2px;top:699.8px;font-size:12.2px;letter-spacing:-0.27px;transform:scaleX(0.9738);transform-origin:0 50%;">XAML</div>
<svg style="left:315px;top:703px" width="12" height="12" viewBox="0 0 12 12"><path d="M3 11V1M0.5 3.8L3 1L5.5 3.8M9 1V11M6.5 8.2L9 11L11.5 8.2" fill="none" stroke="#f0f0f0" stroke-width="1.4"/></svg>
<svg style="left:333px;top:702px" width="76" height="18.4" viewBox="0 0 76 18.4"><path d="M0 18.4L15.5 0H73A3 3 0 0 1 76 3V18.4Z" fill="#383838"/></svg>
<svg style="left:351.5px;top:706px" width="12" height="12" viewBox="0 0 12 12"><path d="M0.6 0.6H10.4V9.4H0.6Z" fill="none" stroke="#e6e6e6" stroke-width="1.2"/><path d="M2.5 2.5H8.5V7H2.5Z" fill="#9a9a9a"/><circle cx="9" cy="9" r="2.4" fill="#2b2b2b" stroke="#e6e6e6" stroke-width="1.1"/></svg>
<div class="t " style="left:366.3px;top:703.8px;font-size:12.2px;letter-spacing:-0.27px;transform:scaleX(0.9737);transform-origin:0 50%;">Design</div>
<svg style="left:414.6px;top:704.5px" width="12" height="12" viewBox="0 0 12 12"><path d="M5 1.6H0.6V11.4H10.4V7" fill="none" stroke="#e6e6e6" stroke-width="1.2"/><path d="M5.5 6.5L11 1M7 0.6H11.4V5" fill="none" stroke="#3aa0f0" stroke-width="1.5"/></svg>
<svg style="left:1640px;top:704px" width="10" height="10" viewBox="0 0 10 10"><path d="M0.5 0.5H9.5V9.5H0.5ZM5 2V8" fill="none" stroke="#e6e6e6" stroke-width="1"/></svg>
<div class="a" style="left:1653.5px;top:702.5px;width:14px;height:13.5px;background:#2b2b2b;border:1px solid #5a5a5a"></div>
<svg style="left:1655.5px;top:704px" width="10" height="10" viewBox="0 0 10 10"><path d="M0.5 0.5H9.5V9.5H0.5ZM2 5H8" fill="none" stroke="#e6e6e6" stroke-width="1"/></svg>
<svg style="left:1670px;top:704px" width="10" height="10" viewBox="0 0 10 10"><path d="M0.5 0.5H9.5V9.5H0.5ZM2.5 2.5L5 4.8L7.5 2.5M2.5 5.2L5 7.5L7.5 5.2" fill="none" stroke="#e6e6e6" stroke-width="1"/></svg>
<div class="a" style="left:227px;top:720.4px;width:1458.3px;height:270.6px;background:#1b1b1b;"></div>
<div class="a" style="left:506px;top:720.7px;width:884px;height:270.3px;background:#ffffff;border-left:2px solid #5b8cf0;border-right:2px solid #5b8cf0"></div>
<div class="a" style="left:1002px;top:735.5px;width:277px;height:256px;border:1px solid #a6a6a6;border-bottom:none;box-shadow:0 0 2px rgba(0,0,0,0.25)"></div>
<div class="a" style="left:1009px;top:742px;height:24px;line-height:24px;font-size:17.2px;font-weight:bold;letter-spacing:-0.1px;white-space:nowrap;font-family:&quot;Liberation Sans&quot;,sans-serif;color:#000;-webkit-text-stroke:0.5px #000;transform:scaleX(0.99);transform-origin:0 50%">Païssos</div>
<div class="a" style="left:1004.3px;top:772px;width:14.5px;height:14.5px;border:1px solid #333;background:#fff"></div>
<div class="t " style="left:1025.3px;top:771.6px;font-size:13.6px;letter-spacing:-0.1px;transform:scaleX(0.9637);transform-origin:0 50%;color:#111;">Agregar Totes</div>
<div class="a" style="left:1228px;top:771.5px;width:33px;height:21.2px;background:#e3e5f7;border:1px solid #c3c7e6"></div>
<svg style="left:1236px;top:774.5px" width="10" height="15" viewBox="0 0 10 15"><path d="M5 0.5C7.8 0.5 9.5 2.5 9.5 4.8C9.5 6.8 8 7.6 7.6 9.8H2.4C2 7.6 0.5 6.8 0.5 4.8C0.5 2.5 2.2 0.5 5 0.5Z" fill="#f5c400"/><path d="M3.3 5L5 7L6.7 5M5 7V9.5" fill="none" stroke="#fff3b0" stroke-width="0.8"/><path d="M3 11.4H7M3.6 13.2H6.4" stroke="#555" stroke-width="1"/></svg>
<svg style="left:1251px;top:778.5px" width="4" height="7" viewBox="0 0 4 7"><path d="M0 0L4 3.5L0 7Z" fill="#111"/></svg>
<div class="a" style="left:1021.1px;top:805.5px;width:14.2px;height:14.2px;border:1px solid #333;background:#fff"></div>
<div class="t " style="left:1041.9px;top:804.7px;font-size:13.6px;letter-spacing:-0.1px;transform:scaleX(0.9394);transform-origin:0 50%;color:#111;">Anglès</div>
<div class="a" style="left:1021.1px;top:822.2px;width:14.2px;height:14.2px;border:1px solid #333;background:#fff"></div>
<div class="t " style="left:1041.9px;top:821.4000000000001px;font-size:13.6px;letter-spacing:-0.1px;transform:scaleX(0.9349);transform-origin:0 50%;color:#111;">Girona</div>
<div class="a" style="left:1021.1px;top:838.9px;width:14.2px;height:14.2px;border:1px solid #333;background:#fff"></div>
<div class="t " style="left:1041.9px;top:838.1px;font-size:13.6px;letter-spacing:-0.1px;transform:scaleX(0.9053);transform-origin:0 50%;color:#111;">Berga</div>
<div class="a" style="left:1021.1px;top:855.6px;width:14.2px;height:14.2px;border:1px solid #333;background:#fff"></div>
<div class="t " style="left:1041.9px;top:854.8000000000001px;font-size:13.6px;letter-spacing:-0.1px;transform:scaleX(0.9902);transform-origin:0 50%;color:#111;">Olot</div>
<div class="a" style="left:1021.1px;top:872.3px;width:14.2px;height:14.2px;border:1px solid #333;background:#fff"></div>
<div class="t " style="left:1041.9px;top:871.5px;font-size:13.6px;letter-spacing:-0.1px;transform:scaleX(0.9607);transform-origin:0 50%;color:#111;">Ripoll</div>
<div class="a" style="left:1018.3px;top:803px;width:244.5px;height:85px;border:1.3px solid #6f97ec"></div>
<div class="a" style="left:1014.3px;top:798.8px;width:5.4px;height:5.4px;border:1px solid #6f97ec;background:#fff"></div>
<div class="a" style="left:1014.3px;top:842.6px;width:5.4px;height:5.4px;border:1px solid #6f97ec;background:#fff"></div>
<div class="a" style="left:1014.3px;top:886.8px;width:5.4px;height:5.4px;border:1px solid #6f97ec;background:#fff"></div>
<div class="a" style="left:1137.3px;top:798.8px;width:5.4px;height:5.4px;border:1px solid #6f97ec;background:#fff"></div>
<div class="a" style="left:1136.8px;top:841.9px;width:6.2px;height:6.2px;border:1px solid #6f97ec;border-radius:50%;background:#fff"></div>
<div class="a" style="left:1137.3px;top:886.8px;width:5.4px;height:5.4px;border:1px solid #6f97ec;background:#fff"></div>
<div class="a" style="left:1261.1px;top:798.8px;width:5.4px;height:5.4px;border:1px solid #6f97ec;background:#fff"></div>
<div class="a" style="left:1261.1px;top:842.6px;width:5.4px;height:5.4px;border:1px solid #6f97ec;background:#fff"></div>
<div class="a" style="left:1261.1px;top:886.8px;width:5.4px;height:5.4px;border:1px solid #6f97ec;background:#fff"></div>
<div class="a" style="left:1668px;top:720.4px;width:17.3px;height:270.6px;background:#2b2b2b;"></div>
<svg style="left:1672.2px;top:726.0px" width="9" height="5" viewBox="0 0 9 5"><path d="M0 5H9L4.5 0Z" fill="#b0b0b0"/></svg>
<div class="a" style="left:1672.3px;top:803.7px;width:8.8px;height:103.6px;background:#4a4a4a;"></div>
<svg style="left:1672.2px;top:980.5px" width="9" height="5" viewBox="0 0 9 5"><path d="M0 0H9L4.5 5Z" fill="#b0b0b0"/></svg>
<div class="a" style="left:227px;top:991px;width:1458.3px;height:19px;background:#2b2b2b;"></div>
<div class="a" style="left:227px;top:992px;width:62px;height:16.5px;background:#242424;border:1px solid #3a3a3a"></div>
<div class="a" style="left:276px;top:993px;width:1px;height:14.5px;background:#3a3a3a;"></div>
<div class="t " style="left:233.5px;top:992.6px;font-size:11.8px">110%</div>
<svg style="left:280.0px;top:998.5px" width="5" height="3" viewBox="0 0 5 3"><path d="M0 0H5L2.5 3Z" fill="#d6d6d6"/></svg>
<svg style="left:297.5px;top:995.5px" width="9" height="10" viewBox="0 0 9 10"><path d="M6.5 2.3A3.4 3.4 0 1 0 7.9 5.5" fill="none" stroke="#e0e0e0" stroke-width="1.5"/><path d="M4.8 0L8.2 2.6L4.6 4.4Z" fill="#e0e0e0"/></svg>
<div class="a" style="left:312px;top:992.3px;width:22px;height:16.4px;background:#1f1f1f;border:1px solid #7160e8"></div>
<div class="a" style="left:316px;top:992px;height:16px;line-height:15px;font-family:&quot;Liberation Serif&quot;,serif;font-style:italic;font-weight:bold;font-size:14.5px;color:#ececec;letter-spacing:-0.6px">fx</div>
<svg style="left:339px;top:996px" width="14" height="9" viewBox="0 0 14 9"><rect x="0" y="0" width="4" height="3.6" fill="#e6e6e6"/><rect x="0" y="4.6" width="4" height="3.6" fill="#e6e6e6"/><rect x="5" y="0" width="4" height="3.6" fill="#e6e6e6"/><rect x="5" y="4.6" width="4" height="3.6" fill="#e6e6e6"/><rect x="10" y="0" width="4" height="3.6" fill="#e6e6e6"/><rect x="10" y="4.6" width="4" height="3.6" fill="#e6e6e6"/></svg>
<svg style="left:362px;top:996px" width="14" height="9" viewBox="0 0 14 9"><rect x="0" y="0" width="4" height="3.6" fill="#e6e6e6"/><rect x="0" y="4.6" width="4" height="3.6" fill="#e6e6e6"/><rect x="5" y="0" width="4" height="3.6" fill="#e6e6e6"/><rect x="5" y="4.6" width="4" height="3.6" fill="#e6e6e6"/><rect x="10" y="0" width="4" height="3.6" fill="#e6e6e6"/><rect x="10" y="4.6" width="4" height="3.6" fill="#e6e6e6"/><circle cx="4.5" cy="4.2" r="3.2" fill="#2b2b2b" stroke="#e6e6e6" stroke-width="1"/></svg>
<div class="a" style="left:386px;top:994.5px;width:12px;height:12px;background:#d0d0d0;background-image:conic-gradient(#8a8a8a 25%,#e8e8e8 0 50%,#8a8a8a 0 75%,#e8e8e8 0);background-size:3px 3px"></div>
<div class="a" style="left:404px;top:992.3px;width:22px;height:16.4px;background:#1f1f1f;border:1px solid #7160e8"></div>
<svg style="left:408px;top:995px" width="14" height="11" viewBox="0 0 14 11"><path d="M0 5.5H14M4.5 0.5V10.5" stroke="#e6e6e6" stroke-width="1"/><circle cx="4.5" cy="5.5" r="2" fill="#1f1f1f" stroke="#e6e6e6" stroke-width="1"/></svg>
<div class="a" style="left:427.3px;top:992.3px;width:22px;height:16.4px;background:#1f1f1f;border:1px solid #7160e8"></div>
<svg style="left:432px;top:994px" width="12" height="13" viewBox="0 0 12 13"><path d="M2 9V0.6H7.5L10.4 3.5V9" fill="none" stroke="#e6e6e6" stroke-width="1.1"/><path d="M5.5 2.5V6.5H8.5" fill="none" stroke="#e6e6e6" stroke-width="1"/><rect x="4.5" y="9" width="3.4" height="3.4" fill="#3aa0f0"/><path d="M2.8 9L1.2 10.7L2.8 12.4M9.4 9L11 10.7L9.4 12.4" fill="none" stroke="#e6e6e6" stroke-width="0.9"/></svg>
<svg style="left:455.0px;top:996.0px" width="5" height="9" viewBox="0 0 5 9"><path d="M5 0V9L0 4.5Z" fill="#b0b0b0"/></svg>
<div class="a" style="left:604.7px;top:996px;width:907px;height:9.2px;background:#4a4a4a;"></div>
<svg style="left:1656.5px;top:996.0px" width="5" height="9" viewBox="0 0 5 9"><path d="M0 0V9L5 4.5Z" fill="#b0b0b0"/></svg>
<div class="a" style="left:1692px;top:72px;width:221.6px;height:939px;background:#1f1f1f;border:1px solid #3a3a3a"></div>
<div class="t g" style="left:1697px;top:75.6px;font-size:12.2px;letter-spacing:-0.27px;transform:scaleX(1.0191);transform-origin:0 50%;">Solution Explorer</div>
<svg style="left:1865.0px;top:81.0px" width="8" height="4" viewBox="0 0 8 4"><path d="M0 0H8L4.0 4Z" fill="#d6d6d6"/></svg>
<svg style="left:1881px;top:77px" width="9" height="12" viewBox="0 0 9 12"><path d="M2.5 0.6H6.5V6.5H2.5ZM0.5 6.8H8.5M4.5 7V12" fill="none" stroke="#e0e0e0" stroke-width="1.1"/><path d="M5.5 0.6H6.5V6.5H5.5Z" fill="#e0e0e0"/></svg>
<svg style="left:1897px;top:78px" width="10" height="10" viewBox="0 0 10 10"><path d="M0.5 0.5L9.5 9.5M9.5 0.5L0.5 9.5" stroke="#e0e0e0" stroke-width="1.3"/></svg>
<svg style="left:1701px;top:101.5px" width="13" height="13" viewBox="0 0 13 13"><circle cx="6.5" cy="6.5" r="5.8" fill="none" stroke="#454545" stroke-width="1.1"/><path d="M9.5 6.5H4M6 4L3.6 6.5L6 9" fill="none" stroke="#454545" stroke-width="1.1"/></svg>
<svg style="left:1723px;top:101.5px" width="13" height="13" viewBox="0 0 13 13"><circle cx="6.5" cy="6.5" r="5.8" fill="none" stroke="#454545" stroke-width="1.1"/><path d="M3.5 6.5H9M7 4L9.4 6.5L7 9" fill="none" stroke="#454545" stroke-width="1.1"/></svg>
<svg style="left:1745px;top:101px" width="14" height="13" viewBox="0 0 14 13"><path d="M0.8 7L7 1L13.2 7M2.5 6V12.4H5.5V8.5H8.5V12.4H11.5V6" fill="none" stroke="#e0e0e0" stroke-width="1.2"/></svg>
<svg style="left:1766px;top:100px" width="16" height="16" viewBox="0 0 16 16"><path d="M6.5 0.6H14.4V10.4H9" fill="none" stroke="#e0e0e0" stroke-width="1.1"/><path d="M8.5 3H12.5M8.5 5.2H12.5M8.5 7.4H12.5" stroke="#e0e0e0" stroke-width="1"/><path d="M6.8 6.3L8.5 7V14L6.8 14.8L2.8 11.5L1.2 12.7L0.4 12.3V8.7L1.2 8.3L2.8 9.5ZM6.8 8.6L4.4 10.5L6.8 12.4Z" fill="#b07de8" fill-rule="evenodd"/></svg>
<div class="a" style="left:1788.5px;top:99px;width:1px;height:19px;background:#424242;"></div>
<svg style="left:1797px;top:100px" width="15" height="16" viewBox="0 0 15 16"><circle cx="8.5" cy="9.5" r="5" fill="none" stroke="#e0e0e0" stroke-width="1.2"/><path d="M8.5 6.5V9.8H11" fill="none" stroke="#e0e0e0" stroke-width="1.1"/><path d="M0 0.3H5L3.2 2.5V4.5H1.8V2.5Z" fill="#3aa0f0"/></svg>
<svg style="left:1819.0px;top:107.0px" width="6" height="3" viewBox="0 0 6 3"><path d="M0 0H6L3.0 3Z" fill="#d6d6d6"/></svg>
<svg style="left:1832.5px;top:103px" width="13" height="11" viewBox="0 0 13 11"><path d="M0.5 3H12M9.5 0.5L12.2 3M1 8H12.5M3.5 10.5L0.8 8" fill="none" stroke="#e0e0e0" stroke-width="1.2"/></svg>
<svg style="left:1854px;top:100.5px" width="15" height="15" viewBox="0 0 15 15"><path d="M2.5 2.5V0.6H14.4V12.5H12.5" fill="none" stroke="#e0e0e0" stroke-width="1.1"/><path d="M0.6 2.6H12.4V14.4H0.6Z" fill="none" stroke="#e0e0e0" stroke-width="1.2"/><path d="M3.5 8.5H9.5" stroke="#e0e0e0" stroke-width="1.2"/></svg>
<svg style="left:1876px;top:101.5px" width="14" height="14" viewBox="0 0 14 14"><path d="M4.5 0.6H13.4V9.5H4.5Z" fill="none" stroke="#e0e0e0" stroke-width="1.1"/><path d="M0.6 4.1H9.5V13.4H0.6Z" fill="#1f1f1f" stroke="#e0e0e0" stroke-width="1.2"/></svg>
<svg style="left:1904.5px;top:98.3px" width="7" height="4" viewBox="0 0 7 4"><path d="M0 0L2.4 2L0 4ZM4.3 0L6.7 2L4.3 4Z" fill="#e0e0e0"/></svg>
<div class="a" style="left:1693.6px;top:122.4px;width:219px;height:20.6px;background:#383838;"></div>
<div class="t g" style="left:1698.3px;top:125.19999999999999px;font-size:12.2px;letter-spacing:-0.27px;transform:scaleX(0.9917);transform-origin:0 50%;">Search Solution Explorer</div>
<svg style="left:1885px;top:126px" width="14" height="14" viewBox="0 0 14 14"><circle cx="9" cy="5" r="3.4" fill="none" stroke="#d6d6d6" stroke-width="1.8"/><path d="M6.4 7.6L1.5 12.5" stroke="#d6d6d6" stroke-width="2.3"/></svg>
<svg style="left:1903.0px;top:131.5px" width="6" height="3" viewBox="0 0 6 3"><path d="M0 0H6L3.0 3Z" fill="#d0d0d0"/></svg>
<div class="a" style="left:1693.6px;top:144px;width:219px;height:830px;overflow:hidden"><div class="a" style="left:-1693.6px;top:-144px">
<div class="a" style="left:1693.6px;top:164px;width:219px;height:19px;background:#3d3d3d;"></div>
<svg style="left:1708px;top:148px" width="15" height="14" viewBox="0 0 15 14"><path d="M3.5 12.4H0.6V0.6H13.4V5" fill="none" stroke="#c8c8c8" stroke-width="1.2"/><path d="M0.6 3H13.4" stroke="#c8c8c8" stroke-width="1"/><g transform="translate(5,5)"><path d="M6.8 0.3L8.5 1V8L6.8 8.8L2.8 5.5L1.2 6.7L0.4 6.3V2.7L1.2 2.3L2.8 3.5ZM6.8 2.6L4.4 4.5L6.8 6.4Z" fill="#b07de8" fill-rule="evenodd"/></g></svg>
<div class="t " style="left:1728.2px;top:146.8px;font-size:12.2px;letter-spacing:-0.27px;transform:scaleX(0.9964);transform-origin:0 50%;">Solution &#39;S11 ComboBoxCheckBox&#39; (1 of 1 project)</div>
<svg style="left:1704.5px;top:172px" width="6.5" height="6.5" viewBox="0 0 6.5 6.5"><path d="M6.5 0V6.5H0Z" fill="#e0e0e0"/></svg>
<div class="a" style="left:1726.2px;top:168px;width:13.8px;height:12px;background:#3d3d3d;border:1px solid #c8c8c8"></div>
<div class="a" style="left:1727.6px;top:168.5px;font-size:9.5px;line-height:11px;font-weight:bold;color:#6cc56c;letter-spacing:-0.6px">C#</div>
<div class="t " style="left:1745.6px;top:165.7px;font-size:12.2px;letter-spacing:-0.27px;transform:scaleX(0.9851);transform-origin:0 50%;font-weight:bold;color:#fff">S11 ComboBoxCheckBox</div>
<svg style="left:1721px;top:187.9px" width="6" height="10" viewBox="0 0 6 10"><path d="M0.6 0.8L5.2 5L0.6 9.2Z" fill="none" stroke="#d0d0d0" stroke-width="1.1"/></svg>
<svg style="left:1743px;top:187px" width="16" height="11" viewBox="0 0 16 11"><path d="M0.6 4.6H4.4V8.4H0.6ZM8.6 0.6H14.4V4.4H8.6ZM6.6 6.6H12.4V10.4H6.6ZM4.4 6.5H6.6M8 4.4V6.6" fill="none" stroke="#d0d0d0" stroke-width="1.2"/></svg>
<div class="t " style="left:1764.3px;top:184.9px;font-size:12.2px;letter-spacing:-0.27px;transform:scaleX(0.9885);transform-origin:0 50%;">Dependencies</div>
<svg style="left:1721px;top:206.9px" width="6" height="10" viewBox="0 0 6 10"><path d="M0.6 0.8L5.2 5L0.6 9.2Z" fill="none" stroke="#d0d0d0" stroke-width="1.1"/></svg>
<svg style="left:1743px;top:203.9px" width="14" height="16" viewBox="0 0 14 16"><path d="M3 9V0.6H9L12.4 4V11" fill="none" stroke="#d0d0d0" stroke-width="1.1"/><rect x="4.7" y="10.5" width="3.6" height="3.6" fill="#3aa0f0"/><path d="M2.6 10L0.8 12.3L2.6 14.6M10.4 10L12.2 12.3L10.4 14.6" fill="none" stroke="#d0d0d0" stroke-width="1"/></svg>
<div class="t " style="left:1764.3px;top:203.9px;font-size:12.2px;letter-spacing:-0.27px;transform:scaleX(1.0371);transform-origin:0 50%;">App.xaml</div>
<div class="a" style="left:1743px;top:223.5px;font-size:12.5px;line-height:15px;font-weight:bold;color:#6cc56c;letter-spacing:-0.5px">C#</div>
<div class="t " style="left:1764.3px;top:222.9px;font-size:12.2px;letter-spacing:-0.27px;transform:scaleX(1.0134);transform-origin:0 50%;">AssemblyInfo.cs</div>
<svg style="left:1721px;top:244.9px" width="6" height="10" viewBox="0 0 6 10"><path d="M0.6 0.8L5.2 5L0.6 9.2Z" fill="none" stroke="#d0d0d0" stroke-width="1.1"/></svg>
<svg style="left:1743px;top:241.9px" width="14" height="16" viewBox="0 0 14 16"><path d="M3 9V0.6H9L12.4 4V11" fill="none" stroke="#d0d0d0" stroke-width="1.1"/><rect x="4.7" y="10.5" width="3.6" height="3.6" fill="#3aa0f0"/><path d="M2.6 10L0.8 12.3L2.6 14.6M10.4 10L12.2 12.3L10.4 14.6" fill="none" stroke="#d0d0d0" stroke-width="1"/></svg>
<div class="t " style="left:1764.3px;top:241.9px;font-size:12.2px;letter-spacing:-0.27px;transform:scaleX(1.0556);transform-origin:0 50%;">MainWindow.xaml</div>
</div></div>
<div class="a" style="left:1693.6px;top:974px;width:219px;height:16.5px;background:#2b2b2b;"></div>
<svg style="left:1699.0px;top:977.3px" width="5" height="9" viewBox="0 0 5 9"><path d="M5 0V9L0 4.5Z" fill="#b0b0b0"/></svg>
<div class="a" style="left:1710px;top:977.5px;width:134.8px;height:9px;background:#4a4a4a;"></div>
<svg style="left:1902.0px;top:977.3px" width="5" height="9" viewBox="0 0 5 9"><path d="M0 0V9L5 4.5Z" fill="#b0b0b0"/></svg>
<div class="a" style="left:1692px;top:990.5px;width:221.6px;height:20.5px;background:#1f1f1f;border:1px solid #3a3a3a"></div>
<div class="a" style="left:1693.6px;top:990.5px;width:100px;height:20px;background:#1f1f1f;border-right:1px solid #3a3a3a"></div>
<div class="t " style="left:1698.4px;top:992.2px;font-size:12.2px;letter-spacing:-0.27px;transform:scaleX(1.0123);transform-origin:0 50%;">Solution Explorer</div>
<div class="t " style="left:1800.4px;top:992.2px;font-size:12.2px;letter-spacing:-0.27px;transform:scaleX(1.0120);transform-origin:0 50%;color:#b0b0b0">Diagnostic Tools</div>
<div class="a" style="left:0px;top:1011px;width:1920px;height:6px;background:#1f1f1f;"></div>
<div class="a" style="left:0px;top:1017px;width:1920px;height:23px;background:#424242;"></div>
<svg style="left:4px;top:1021px" width="16" height="16" viewBox="0 0 16 16"><path d="M0.6 0.6H15.4V11.4H10L8 13.8L6 11.4H0.6Z" fill="none" stroke="#e6e6e6" stroke-width="1.1"/></svg>
<div class="t " style="left:28px;top:1020.7px;font-size:12.2px;letter-spacing:-0.27px;transform:scaleX(0.9436);transform-origin:0 50%;">Ready</div>
<svg style="left:1492px;top:1022px" width="10" height="13" viewBox="0 0 10 13"><path d="M5 13V1M0.8 5L5 0.8L9.2 5" fill="none" stroke="#e6e6e6" stroke-width="1.1"/></svg>
<div class="t " style="left:1512.3px;top:1020.7px;font-size:12.2px;letter-spacing:-0.27px;transform:scaleX(1.0292);transform-origin:0 50%;">Add to Source Control</div>
<svg style="left:1637.8px;top:1026.5px" width="7" height="4" viewBox="0 0 7 4"><path d="M0 4H7L3.5 0Z" fill="#e6e6e6"/></svg>
<svg style="left:1667px;top:1022px" width="14" height="13" viewBox="0 0 14 13"><path d="M0.5 0.6H13.5M1.8 0.6V12.4H12.2V0.6M4.5 3V9.5M4.5 9.5H9.5V3" fill="none" stroke="#e6e6e6" stroke-width="1.1"/></svg>
<div class="t " style="left:1688.2px;top:1020.7px;font-size:12.2px;letter-spacing:-0.27px;transform:scaleX(0.9800);transform-origin:0 50%;">Select Repository</div>
<svg style="left:1785.2px;top:1026.5px" width="7" height="4" viewBox="0 0 7 4"><path d="M0 4H7L3.5 0Z" fill="#e6e6e6"/></svg>
<svg style="left:1813px;top:1021px" width="12" height="14" viewBox="0 0 12 14"><path d="M1 10.5C2.5 9 2 5 3 3C4 0.5 8 0.5 9 3C10 5 9.5 9 11 10.5Z" fill="none" stroke="#e6e6e6" stroke-width="1.1"/></svg>
<div class="a" style="left:1821.5px;top:1026.5px;width:11px;height:11px;border-radius:50%;background:#f08a9b;color:#3a1010;font-size:8.5px;line-height:11px;text-align:center;font-weight:bold">3</div>
<svg style="left:1853px;top:1020px" width="15" height="17" viewBox="0 0 15 17"><path d="M9.5 0.5L13 1.5L10.5 10L7 9Z" fill="#f5d000"/><path d="M6.5 10L10.5 11.2L9.5 13L5 14.5L2.5 13.7L4.2 11.5Z" fill="none" stroke="#e6e6e6" stroke-width="1"/><path d="M1 16H7" stroke="#e6e6e6" stroke-width="1"/></svg>
<svg style="left:1878px;top:1022px" width="15" height="13" viewBox="0 0 15 13"><path d="M0.5 0.5H14.5L7.5 12.5Z" fill="#3cb54a"/><path d="M4.2 3.2L7.5 8.6L10.8 3.2" fill="none" stroke="#fff" stroke-width="1.5"/></svg>
<div class="a" style="left:1898.5px;top:1020.5px;width:17px;height:17px;border-radius:50%;border:1.2px solid #d8d8d8;background:#303030"></div>
<div class="a" style="left:0px;top:1040px;width:1920px;height:40px;background:#1c1c1c;"></div>
<svg style="left:16px;top:1052px" width="16" height="16" viewBox="0 0 16 16"><path d="M0 2.3L6.6 1.4V7.6H0ZM7.4 1.3L16 0V7.6H7.4ZM0 8.4H6.6V14.6L0 13.7ZM7.4 8.4H16V16L7.4 14.7Z" fill="#fff"/></svg>
<div class="a" style="left:48.5px;top:1040.5px;width:287px;height:40px;background:#2c2c2c;border:1px solid #4f4f4f;border-bottom:none"></div>
<svg style="left:59px;top:1050px" width="20" height="20" viewBox="0 0 20 20"><circle cx="12.5" cy="7.5" r="5" fill="none" stroke="#e6e6e6" stroke-width="1.3"/><path d="M9 11L1.5 18.5" stroke="#e6e6e6" stroke-width="1.4"/></svg>
<div class="a" style="left:88.5px;top:1050.5px;height:20px;line-height:20px;font-size:15.3px;color:#e4e4e4;white-space:nowrap;letter-spacing:-0.1px;transform:scaleX(0.9529);transform-origin:0 50%">Escriu aquí per cercar</div>
<svg style="left:258px;top:1043px" width="78" height="37" viewBox="0 0 78 37"><path d="M16 22H77V28H9Z" fill="#f0d9b5"/><path d="M9 28H77V37H0Z" fill="#e2bf8e"/><path d="M12.5 13L24 8.5L35 11L37.5 25.5L27 25L16 29Z" fill="#f4f6fa" stroke="#3aa35f" stroke-width="1.5" stroke-linejoin="round"/><path d="M24 8.5L27 25" stroke="#b8c0cc" stroke-width="1"/><path d="M15.5 15.5L22.5 13M16.2 18.5L23.2 16M17 21.5L24 19M27 12.5L33.5 14M27.6 15.5L34 17M28.2 18.5L34.6 20" stroke="#a8b0bc" stroke-width="0.8"/><path d="M30.5 15.5L37.5 6.5L40 8.5L33 17.5L30 18.5Z" fill="#f5b942"/><path d="M37.5 6.5L39.3 4.2L41.8 6.2L40 8.5Z" fill="#f27b6a"/><path d="M47 11.5C47 3 68 3 68 11.5V25C68 28.5 66 29.5 63.5 29.5H51.5C49 29.5 47 28.5 47 25Z" fill="#2f7df0"/><path d="M52.5 5C52.5 -1.2 62.5 -1.2 62.5 5" fill="none" stroke="#2a6ad8" stroke-width="2.2"/><path d="M49.5 20C49.5 14.5 65.5 14.5 65.5 20V25C65.5 27.5 64.5 28 62.5 28H52.5C50.5 28 49.5 27.5 49.5 25Z" fill="#4a97ff"/><path d="M51 26.8H64" stroke="#c48af0" stroke-width="1.6"/></svg>
<svg style="left:351px;top:1053px" width="17" height="14" viewBox="0 0 17 14"><path d="M3 2.6H12V11.4H3Z" fill="none" stroke="#fff" stroke-width="1.2"/><path d="M0.6 0.5V3.5M0.6 10.5V13.5M0 0.6H4M0 13.4H4M9 0.6H12.6V2M9 13.4H12.6V12" fill="none" stroke="#fff" stroke-width="1.1"/><path d="M15.4 3V4.5M15.4 6V13" stroke="#fff" stroke-width="1.3"/></svg>
<div class="a" style="left:399px;top:1048px;width:24px;height:24px;background:#f37a20;border-radius:3px"></div>
<svg style="left:399px;top:1048px" width="24" height="24" viewBox="0 0 24 24"><path d="M6.5 7.5C6.5 4.5 10.5 4.5 12 8C13.5 4.5 17.5 4.5 17.5 7.5C17.5 10 15.5 10.5 15.5 12C15.5 13.5 17.5 14 17.5 16.5C17.5 19.5 13.5 19.5 12 16C10.5 19.5 6.5 19.5 6.5 16.5C6.5 14 8.5 13.5 8.5 12C8.5 10.5 6.5 10 6.5 7.5Z" fill="none" stroke="#fff" stroke-width="2.2"/></svg>
<svg style="left:448px;top:1052px" width="23" height="19" viewBox="0 0 23 19"><path d="M0.5 2C0.5 1 1 0.5 2 0.5H8L10 2.5H21C22 2.5 22.5 3 22.5 4V17H0.5Z" fill="#f0b429"/><path d="M0.5 5.5H22.5V17.5C22.5 18 22 18.5 21.5 18.5H1.5C1 18.5 0.5 18 0.5 17.5Z" fill="#ffd75e"/><path d="M6 13.5H17V18.5H6Z" fill="#3a8ee6"/><path d="M8.5 16H14.5V18.5H8.5Z" fill="#ffd75e"/></svg>
<div class="a" style="left:440px;top:1078px;width:40px;height:2px;background:#76b9ed;"></div>
<svg style="left:0px;top:0px" width="1920" height="1080" viewBox="0 0 1920 1080"><path d="M509 1059.5L499.04 1053.75A11.5 11.5 0 0 1 518.96 1053.75Z" fill="#ea4335"/><path d="M509 1059.5L518.96 1053.75A11.5 11.5 0 0 1 509.00 1071.00Z" fill="#fbbc05"/><path d="M509 1059.5L509.00 1071.00A11.5 11.5 0 0 1 499.04 1053.75Z" fill="#34a853"/><circle cx="509" cy="1059.5" r="5.29" fill="#fff"/><circle cx="509" cy="1059.5" r="4.14" fill="#4285f4"/><path d="M557.6 1059.5L547.64 1053.75A11.5 11.5 0 0 1 567.56 1053.75Z" fill="#ea4335"/><path d="M557.6 1059.5L567.56 1053.75A11.5 11.5 0 0 1 557.60 1071.00Z" fill="#fbbc05"/><path d="M557.6 1059.5L557.60 1071.00A11.5 11.5 0 0 1 547.64 1053.75Z" fill="#34a853"/><circle cx="557.6" cy="1059.5" r="5.29" fill="#fff"/><circle cx="557.6" cy="1059.5" r="4.14" fill="#4285f4"/><path d="M704.2 1059.5L694.24 1053.75A11.5 11.5 0 0 1 714.16 1053.75Z" fill="#ea4335"/><path d="M704.2 1059.5L714.16 1053.75A11.5 11.5 0 0 1 704.20 1071.00Z" fill="#fbbc05"/><path d="M704.2 1059.5L704.20 1071.00A11.5 11.5 0 0 1 694.24 1053.75Z" fill="#34a853"/><circle cx="704.2" cy="1059.5" r="5.29" fill="#fff"/><circle cx="704.2" cy="1059.5" r="4.14" fill="#4285f4"/></svg>
<svg style="left:556.5px;top:1059px" width="16" height="14" viewBox="0 0 16 14"><ellipse cx="8" cy="5" rx="7" ry="4.6" fill="#111"/><circle cx="8" cy="8.5" r="4" fill="#e8c8b0"/><path d="M2 6C4 1 12 1 14 6C11 5 5 5 2 6Z" fill="#111"/><path d="M5 12L11 12L12 14H4Z" fill="#ddd"/></svg>
<div class="a" style="left:538px;top:1078px;width:40px;height:2px;background:#76b9ed;"></div>
<div class="a" style="left:583px;top:1040px;width:48px;height:40px;background:#3c3c3c;"></div>
<div class="a" style="left:583px;top:1078px;width:48px;height:2px;background:#76b9ed;"></div>
<svg style="left:595.5px;top:1047.7px" width="24" height="24" viewBox="0 0 24 24"><path d="M0 7.2L4.8 3.9L7.9 6.3L16.7 0L23.7 4.8V19.2L16.7 23.8L7.9 17.6L4.8 20L0 16.9Z" fill="#a77cf0"/><path d="M16.7 0L23.7 4.8V19.2L16.7 23.8Z" fill="#c9a8ff"/><path d="M0 7.2L4.8 3.9L16.7 14.5V23.8L7.9 17.6L0 16.9Z" fill="#8a5ad8" opacity="0.55"/><path d="M3.2 9.2V15L6.1 12.1ZM18.2 8.1L14.1 12.1L18.2 16.2Z" fill="#3c3c3c"/></svg>
<div class="a" style="left:645px;top:1048.6px;width:22px;height:21.5px;background:#1c2260;border:1.5px solid #9dc2ff"></div>
<div class="a" style="left:648.2px;top:1051px;font-size:13.5px;line-height:16px;font-weight:bold;color:#9dc2ff;letter-spacing:-0.4px">Ps</div>
<div class="a" style="left:636px;top:1078px;width:40px;height:2px;background:#76b9ed;"></div>
<div class="a" style="left:705px;top:1059.5px;width:13px;height:13px;border-radius:50%;background:#8e24aa;color:#fff;font-size:8.5px;line-height:13px;text-align:center">J</div>
<div class="a" style="left:685px;top:1078px;width:40px;height:2px;background:#76b9ed;"></div>
<svg style="left:1503px;top:1051px" width="28" height="18" viewBox="0 0 28 18"><path d="M6 17C2.5 17 0.5 14.8 0.5 12.3C0.5 9.8 2.5 8 5 8C5.5 3.5 9 0.8 13 0.8C17 0.8 19.8 3.3 20.8 6.5C24.5 6.5 27.3 8.8 27.3 12C27.3 15 25 17 22 17Z" fill="#c8d8f4"/><path d="M6 17C2.5 17 0.5 14.8 0.5 12.3C0.5 10.5 1.6 9 3.2 8.4C8 12 20 13 27.2 11.5C27.5 14.8 25 17 22 17Z" fill="#9db8ea"/></svg>
<div class="a" style="left:1537px;top:1050px;font-size:15.2px;color:#f0f0f0;white-space:nowrap;line-height:20px;height:20px;letter-spacing:-0.4px">11°C</div>
<div class="a" style="left:1575px;top:1050px;font-size:15.2px;color:#f0f0f0;white-space:nowrap;line-height:20px;height:20px;letter-spacing:-0.45px">Nublado</div>
<svg style="left:1652px;top:1056px" width="12" height="7" viewBox="0 0 12 7"><path d="M0.7 6.3L6 1L11.3 6.3" fill="none" stroke="#f0f0f0" stroke-width="1.3"/></svg>
<svg style="left:1676px;top:1055.5px" width="16" height="10" viewBox="0 0 16 10"><path d="M0.6 0.6H13.4V8.4H0.6Z" fill="none" stroke="#f0f0f0" stroke-width="1.1"/><path d="M14.2 3V6.2" stroke="#f0f0f0" stroke-width="1.6"/></svg>
<svg style="left:1698px;top:1055px" width="18" height="11" viewBox="0 0 18 11"><path d="M4.5 10.5C1.5 10.5 0.5 9 0.5 7.5C0.5 6 1.8 4.8 3.3 4.8C3.8 2.2 6 0.6 8.5 0.6C11 0.6 12.7 2 13.4 4C15.8 4 17.5 5.5 17.5 7.4C17.5 9.3 16 10.5 14 10.5Z" fill="#d8d8d8"/><path d="M4.5 10.5C1.5 10.5 0.5 9 0.5 7.5C0.5 6.5 1 5.7 1.8 5.2C5 7.5 13 8.5 17.4 7C17.6 9 16 10.5 14 10.5Z" fill="#a8a8a8"/></svg>
<svg style="left:1726px;top:1053px" width="15" height="14" viewBox="0 0 15 14"><path d="M1 13A12 12 0 0 1 13 1" fill="none" stroke="#8a8a8a" stroke-width="1.2"/><path d="M4.5 13A8.5 8.5 0 0 1 13 4.5" fill="none" stroke="#f0f0f0" stroke-width="1.2"/><path d="M8 13A5 5 0 0 1 13 8" fill="none" stroke="#f0f0f0" stroke-width="1.2"/><circle cx="12" cy="12.3" r="1.4" fill="#f0f0f0"/></svg>
<svg style="left:1747px;top:1053px" width="17" height="14" viewBox="0 0 17 14"><path d="M0.6 4.8H3.3L7 1.2V12.8L3.3 9.2H0.6Z" fill="none" stroke="#f0f0f0" stroke-width="1.1"/><path d="M9.5 4.5C10.8 6 10.8 8 9.5 9.5" fill="none" stroke="#f0f0f0" stroke-width="1.1"/><path d="M11.8 2.5C14 5 14 9 11.8 11.5" fill="none" stroke="#9a9a9a" stroke-width="1.1"/><path d="M14 0.8C17 4 17 10 14 13.2" fill="none" stroke="#6a6a6a" stroke-width="1.1"/></svg>
<div class="t " style="left:1774px;top:1051.5px;font-size:12.2px;letter-spacing:0px;transform:scaleX(0.9151);transform-origin:0 50%;color:#f0f0f0">CAT</div>
<div class="a" style="left:1790px;top:1042.5px;width:88px;text-align:center;font-size:12.2px;line-height:16px;color:#f0f0f0;letter-spacing:-0.3px">23:27</div>
<div class="a" style="left:1790px;top:1060.2px;width:88px;text-align:center;font-size:12.2px;line-height:16px;color:#f0f0f0;letter-spacing:-0.3px">31/10/2023</div>
<svg style="left:1880px;top:1052px" width="17" height="16" viewBox="0 0 17 16"><path d="M0.5 0.5H15.5V12H5L0.5 15.5Z" fill="#f0f0f0"/><path d="M3 3.5H13M3 6.2H13M3 8.8H10" stroke="#1c1c1c" stroke-width="1"/></svg>
<div class="a" style="left:1886.5px;top:1062px;width:14px;height:14px;border-radius:50%;background:#1c1c1c;border:1px solid #e0e0e0;color:#f0f0f0;font-size:9.5px;line-height:12px;text-align:center">5</div>
</div></body></html>
